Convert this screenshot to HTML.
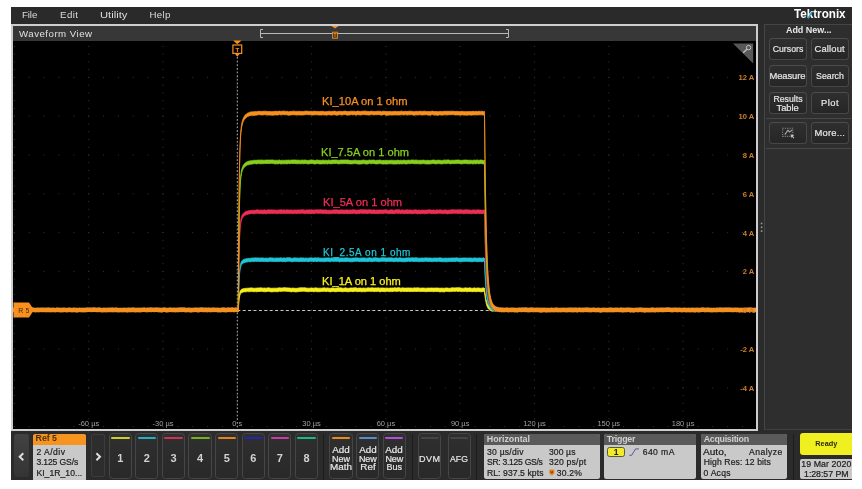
<!DOCTYPE html>
<html><head><meta charset="utf-8"><title>Tektronix Waveform View</title>
<style>
html,body{margin:0;padding:0;background:#fff;}
body{width:862px;height:489px;position:relative;overflow:hidden;font-family:"Liberation Sans", sans-serif;}
#scope div,#scope span.t{position:absolute;}
#scope{position:absolute;left:0;top:0;width:862px;height:489px;overflow:hidden;will-change:transform;}
span.t{white-space:nowrap;}
.rb{background:linear-gradient(#2f2f2f,#262626);border:1px solid #474747;border-top-color:#4c4c4c;border-radius:3.5px;box-sizing:border-box;}
.cb{background:linear-gradient(#2f2f2f,#292929);border:1px solid #464646;border-radius:3.5px;box-sizing:border-box;}
</style></head><body><div id="scope">
<div style="left:11px;top:7.3px;width:841px;height:472.3px;background:#2b2b2b;"></div>
<div style="left:11px;top:7.3px;width:841px;height:16.7px;background:#2a2a2a;"></div>
<div style="left:11px;top:24px;width:747px;height:407px;background:#000;border:2px solid #cecece;box-sizing:border-box;"></div>
<div style="left:13px;top:26px;width:743px;height:14.6px;background:#373737;"></div>
<svg style="position:absolute;left:0;top:0" width="862" height="489" viewBox="0 0 862 489"><defs><clipPath id="pc"><rect x="13" y="40.5" width="743" height="388.5"/></clipPath></defs><g clip-path="url(#pc)"><g stroke="#363636" stroke-width="1"><line x1="14.4" y1="38.10" x2="14.4" y2="429" stroke-dasharray="1 6.760"/><line x1="88.7" y1="38.10" x2="88.7" y2="429" stroke-dasharray="1 6.760"/><line x1="163.0" y1="38.10" x2="163.0" y2="429" stroke-dasharray="1 6.760"/><line x1="237.3" y1="38.10" x2="237.3" y2="429" stroke-dasharray="1 6.760"/><line x1="311.6" y1="38.10" x2="311.6" y2="429" stroke-dasharray="1 6.760"/><line x1="385.9" y1="38.10" x2="385.9" y2="429" stroke-dasharray="1 6.760"/><line x1="460.2" y1="38.10" x2="460.2" y2="429" stroke-dasharray="1 6.760"/><line x1="534.5" y1="38.10" x2="534.5" y2="429" stroke-dasharray="1 6.760"/><line x1="608.8" y1="38.10" x2="608.8" y2="429" stroke-dasharray="1 6.760"/><line x1="683.1" y1="38.10" x2="683.1" y2="429" stroke-dasharray="1 6.760"/><line x1="-60.40" y1="77.4" x2="756" y2="77.4" stroke-dasharray="1 13.860"/><line x1="-60.40" y1="116.2" x2="756" y2="116.2" stroke-dasharray="1 13.860"/><line x1="-60.40" y1="155.0" x2="756" y2="155.0" stroke-dasharray="1 13.860"/><line x1="-60.40" y1="193.8" x2="756" y2="193.8" stroke-dasharray="1 13.860"/><line x1="-60.40" y1="232.6" x2="756" y2="232.6" stroke-dasharray="1 13.860"/><line x1="-60.40" y1="271.4" x2="756" y2="271.4" stroke-dasharray="1 13.860"/><line x1="-60.40" y1="310.2" x2="756" y2="310.2" stroke-dasharray="1 13.860"/><line x1="-60.40" y1="349.0" x2="756" y2="349.0" stroke-dasharray="1 13.860"/><line x1="-60.40" y1="387.8" x2="756" y2="387.8" stroke-dasharray="1 13.860"/><line x1="-60.40" y1="426.6" x2="756" y2="426.6" stroke-dasharray="1 13.860"/></g><line x1="237.3" y1="57" x2="237.3" y2="429" stroke="#b4b4b4" stroke-width="1" stroke-dasharray="1.7 1.95"/><line x1="237.3" y1="310.5" x2="492" y2="310.5" stroke="#c8c8c8" stroke-width="1" stroke-dasharray="3 2.4"/><path d="M12.0,308.4 L13.5,308.3 L15.0,308.6 L16.5,308.3 L18.0,308.6 L19.5,308.5 L21.0,308.3 L22.5,308.6 L24.0,308.3 L25.5,308.5 L27.0,308.3 L28.5,308.3 L30.0,308.5 L31.5,308.7 L33.0,308.3 L34.5,308.4 L36.0,308.6 L37.5,308.8 L39.0,308.6 L40.5,308.5 L42.0,308.8 L43.5,308.3 L45.0,308.8 L46.5,308.4 L48.0,308.3 L49.5,308.3 L51.0,308.4 L52.5,308.7 L54.0,308.4 L55.5,308.6 L57.0,308.6 L58.5,308.5 L60.0,308.6 L61.5,308.3 L63.0,308.3 L64.5,308.4 L66.0,308.7 L67.5,308.5 L69.0,308.4 L70.5,308.6 L72.0,308.5 L73.5,308.4 L75.0,308.7 L76.5,308.7 L78.0,308.4 L79.5,308.6 L81.0,308.6 L82.5,308.8 L84.0,308.7 L85.5,308.4 L87.0,308.8 L88.5,308.3 L90.0,308.5 L91.5,308.7 L93.0,308.3 L94.5,308.5 L96.0,308.3 L97.5,308.7 L99.0,308.7 L100.5,308.6 L102.0,308.8 L103.5,308.4 L105.0,308.7 L106.5,308.6 L108.0,308.6 L109.5,308.5 L111.0,308.8 L112.5,308.8 L114.0,308.5 L115.5,308.6 L117.0,308.3 L118.5,308.7 L120.0,308.6 L121.5,308.8 L123.0,308.7 L124.5,308.4 L126.0,308.5 L127.5,308.7 L129.0,308.3 L130.5,308.5 L132.0,308.4 L133.5,308.3 L135.0,308.3 L136.5,308.7 L138.0,308.3 L139.5,308.4 L141.0,308.5 L142.5,308.8 L144.0,308.3 L145.5,308.5 L147.0,308.6 L148.5,308.8 L150.0,308.7 L151.5,308.8 L153.0,308.4 L154.5,308.5 L156.0,308.5 L157.5,308.8 L159.0,308.8 L160.5,308.3 L162.0,308.4 L163.5,308.4 L165.0,308.4 L166.5,308.5 L168.0,308.6 L169.5,308.4 L171.0,308.3 L172.5,308.5 L174.0,308.5 L175.5,308.6 L177.0,308.8 L178.5,308.7 L180.0,308.6 L181.5,308.6 L183.0,308.7 L184.5,308.3 L186.0,308.8 L187.5,308.7 L189.0,308.8 L190.5,308.7 L192.0,308.5 L193.5,308.5 L195.0,308.3 L196.5,308.6 L198.0,308.3 L199.5,308.3 L201.0,308.4 L202.5,308.3 L204.0,308.5 L205.5,308.3 L207.0,308.3 L208.5,308.3 L210.0,308.3 L211.5,308.5 L213.0,308.3 L214.5,308.8 L216.0,308.6 L217.5,308.3 L219.0,308.4 L220.5,308.5 L222.0,308.5 L223.5,308.3 L225.0,308.8 L226.5,308.8 L228.0,308.5 L229.5,308.5 L231.0,308.3 L232.5,308.3 L234.0,308.5 L235.5,308.4 L237.0,308.7 L238.3,308.6 L238.3,308.6 L238.6,302.6 L238.9,298.6 L239.2,295.8 L239.5,293.6 L239.8,292.2 L240.1,291.3 L240.4,290.6 L240.7,290.2 L241.0,289.8 L241.3,289.5 L241.6,289.3 L241.9,289.2 L242.2,289.0 L242.5,288.9 L242.8,288.8 L243.1,288.7 L243.4,288.7 L243.7,288.6 L244.0,288.5 L244.3,288.5 L244.6,288.5 L244.9,288.4 L245.2,288.4 L245.5,288.3 L245.8,288.3 L246.1,288.3 L246.4,288.3 L246.7,288.2 L247.0,288.2 L247.3,288.2 L247.6,288.2 L247.9,288.2 L248.2,288.2 L248.5,288.1 L248.8,288.1 L249.1,288.1 L249.4,288.1 L249.7,288.1 L250.0,288.1 L250.3,287.9 L250.6,287.8 L250.9,288.3 L251.2,288.1 L251.5,287.8 L251.8,288.1 L252.1,287.8 L252.4,288.1 L253.9,288.3 L255.4,288.2 L256.9,288.1 L258.4,287.9 L259.9,287.9 L261.4,287.8 L262.9,288.2 L264.4,288.0 L265.9,288.2 L267.4,287.9 L268.9,287.8 L270.4,288.2 L271.9,288.3 L273.4,288.2 L274.9,288.2 L276.4,288.2 L277.9,288.1 L279.4,287.8 L280.9,288.0 L282.4,287.9 L283.9,287.7 L285.4,287.7 L286.9,287.9 L288.4,287.9 L289.9,288.1 L291.4,288.3 L292.9,288.0 L294.4,288.3 L295.9,288.3 L297.4,288.3 L298.9,287.9 L300.4,287.8 L301.9,287.8 L303.4,287.8 L304.9,287.8 L306.4,288.1 L307.9,288.2 L309.4,288.2 L310.9,288.0 L312.4,288.1 L313.9,288.2 L315.4,287.8 L316.9,288.1 L318.4,288.2 L319.9,288.2 L321.4,288.2 L322.9,288.0 L324.4,287.8 L325.9,288.2 L327.4,287.9 L328.9,288.2 L330.4,288.3 L331.9,287.9 L333.4,287.9 L334.9,288.3 L336.4,288.1 L337.9,287.8 L339.4,287.8 L340.9,287.8 L342.4,288.2 L343.9,288.2 L345.4,287.8 L346.9,288.2 L348.4,288.3 L349.9,288.1 L351.4,287.9 L352.9,288.0 L354.4,287.8 L355.9,287.7 L357.4,288.3 L358.9,288.1 L360.4,288.0 L361.9,288.3 L363.4,288.0 L364.9,288.2 L366.4,288.2 L367.9,287.8 L369.4,287.9 L370.9,287.9 L372.4,287.8 L373.9,288.1 L375.4,287.9 L376.9,288.0 L378.4,287.8 L379.9,288.2 L381.4,287.9 L382.9,288.0 L384.4,288.1 L385.9,288.2 L387.4,288.0 L388.9,288.3 L390.4,288.0 L391.9,288.0 L393.4,288.0 L394.9,287.7 L396.4,288.0 L397.9,287.8 L399.4,287.7 L400.9,288.2 L402.4,287.8 L403.9,288.0 L405.4,288.1 L406.9,288.0 L408.4,287.9 L409.9,288.0 L411.4,288.0 L412.9,288.2 L414.4,287.8 L415.9,288.0 L417.4,287.8 L418.9,287.9 L420.4,288.2 L421.9,288.0 L423.4,288.0 L424.9,288.2 L426.4,288.2 L427.9,288.0 L429.4,288.1 L430.9,288.0 L432.4,288.0 L433.9,288.1 L435.4,288.0 L436.9,288.0 L438.4,288.0 L439.9,288.3 L441.4,288.1 L442.9,288.2 L444.4,288.3 L445.9,287.9 L447.4,288.0 L448.9,288.3 L450.4,288.2 L451.9,287.8 L453.4,287.8 L454.9,288.0 L456.4,287.7 L457.9,287.8 L459.4,287.7 L460.9,288.1 L462.4,288.2 L463.9,288.2 L465.4,287.8 L466.9,288.1 L468.4,288.1 L469.9,287.8 L471.4,288.2 L472.9,288.3 L474.4,287.8 L475.9,288.3 L477.4,287.9 L478.9,288.0 L480.4,288.3 L481.9,288.2 L483.4,287.8 L484.5,288.5 L484.5,288.0 L484.9,291.9 L485.3,295.0 L485.7,297.5 L486.1,299.4 L486.5,301.0 L486.9,302.3 L487.3,303.4 L487.7,304.2 L488.1,304.9 L488.5,305.4 L488.9,305.9 L489.3,306.3 L489.7,306.6 L490.1,306.8 L490.5,307.0 L490.9,307.2 L491.3,307.4 L491.7,307.5 L492.1,307.6 L492.5,307.7 L492.9,307.8 L493.3,307.8 L493.7,308.2 L494.1,308.3 L494.5,308.3 L494.9,308.3 L495.3,308.4 L495.7,308.4 L496.1,308.4 L496.5,308.4 L496.9,308.4 L497.3,308.5 L497.7,308.5 L498.1,308.5 L498.5,308.5 L498.9,308.5 L499.3,308.5 L499.7,308.4 L500.1,308.3 L500.5,308.4 L500.9,308.7 L502.4,308.2 L503.9,308.6 L505.4,308.5 L506.9,308.3 L508.4,308.4 L509.9,308.6 L511.4,308.6 L512.9,308.3 L514.4,308.8 L515.9,308.7 L517.4,308.8 L518.9,308.3 L520.4,308.4 L521.9,308.3 L523.4,308.7 L524.9,308.4 L526.4,308.3 L527.9,308.5 L529.4,308.8 L530.9,308.7 L532.4,308.4 L533.9,308.3 L535.4,308.8 L536.9,308.6 L538.4,308.7 L539.9,308.3 L541.4,308.3 L542.9,308.7 L544.4,308.5 L545.9,308.3 L547.4,308.8 L548.9,308.6 L550.4,308.7 L551.9,308.3 L553.4,308.8 L554.9,308.3 L556.4,308.8 L557.9,308.5 L559.4,308.5 L560.9,308.6 L562.4,308.8 L563.9,308.4 L565.4,308.3 L566.9,308.6 L568.4,308.4 L569.9,308.3 L571.4,308.3 L572.9,308.3 L574.4,308.4 L575.9,308.4 L577.4,308.4 L578.9,308.7 L580.4,308.4 L581.9,308.6 L583.4,308.4 L584.9,308.5 L586.4,308.3 L587.9,308.4 L589.4,308.3 L590.9,308.7 L592.4,308.6 L593.9,308.4 L595.4,308.5 L596.9,308.8 L598.4,308.3 L599.9,308.7 L601.4,308.5 L602.9,308.5 L604.4,308.8 L605.9,308.5 L607.4,308.6 L608.9,308.7 L610.4,308.8 L611.9,308.5 L613.4,308.7 L614.9,308.7 L616.4,308.6 L617.9,308.5 L619.4,308.5 L620.9,308.3 L622.4,308.3 L623.9,308.3 L625.4,308.7 L626.9,308.4 L628.4,308.3 L629.9,308.3 L631.4,308.8 L632.9,308.8 L634.4,308.7 L635.9,308.4 L637.4,308.4 L638.9,308.4 L640.4,308.5 L641.9,308.3 L643.4,308.5 L644.9,308.4 L646.4,308.8 L647.9,308.8 L649.4,308.6 L650.9,308.4 L652.4,308.8 L653.9,308.4 L655.4,308.5 L656.9,308.3 L658.4,308.5 L659.9,308.5 L661.4,308.6 L662.9,308.4 L664.4,308.6 L665.9,308.3 L667.4,308.4 L668.9,308.3 L670.4,308.5 L671.9,308.3 L673.4,308.3 L674.9,308.4 L676.4,308.4 L677.9,308.6 L679.4,308.6 L680.9,308.7 L682.4,308.6 L683.9,308.7 L685.4,308.8 L686.9,308.5 L688.4,308.4 L689.9,308.8 L691.4,308.3 L692.9,308.7 L694.4,308.6 L695.9,308.3 L697.4,308.8 L698.9,308.8 L700.4,308.6 L701.9,308.7 L703.4,308.7 L704.9,308.3 L706.4,308.6 L707.9,308.6 L709.4,308.8 L710.9,308.7 L712.4,308.7 L713.9,308.6 L715.4,308.8 L716.9,308.7 L718.4,308.7 L719.9,308.4 L721.4,308.3 L722.9,308.3 L724.4,308.5 L725.9,308.3 L727.4,308.8 L728.9,308.6 L730.4,308.6 L731.9,308.6 L733.4,308.7 L734.9,308.5 L736.4,308.3 L737.9,308.7 L739.4,308.7 L740.9,308.6 L742.4,308.6 L743.9,308.6 L745.4,308.3 L746.9,308.7 L748.4,308.4 L749.9,308.3 L751.4,308.4 L752.9,308.7 L754.4,308.4 L755.9,308.7 L757.4,308.8 L757.4,311.6 L755.9,311.5 L754.4,311.2 L752.9,311.5 L751.4,311.3 L749.9,311.1 L748.4,311.2 L746.9,311.4 L745.4,311.0 L743.9,311.4 L742.4,311.4 L740.9,311.3 L739.4,311.5 L737.9,311.4 L736.4,310.9 L734.9,311.3 L733.4,311.5 L731.9,311.5 L730.4,311.5 L728.9,311.3 L727.4,311.6 L725.9,311.1 L724.4,311.3 L722.9,311.0 L721.4,311.2 L719.9,311.1 L718.4,311.6 L716.9,311.6 L715.4,311.4 L713.9,311.4 L712.4,311.6 L710.9,311.7 L709.4,311.5 L707.9,311.3 L706.4,311.3 L704.9,311.3 L703.4,311.5 L701.9,311.5 L700.4,311.3 L698.9,311.6 L697.4,311.7 L695.9,311.0 L694.4,311.5 L692.9,311.5 L691.4,311.3 L689.9,311.7 L688.4,311.2 L686.9,311.4 L685.4,311.6 L683.9,311.3 L682.4,311.3 L680.9,311.5 L679.4,311.4 L677.9,311.3 L676.4,311.1 L674.9,311.2 L673.4,311.0 L671.9,311.2 L670.4,311.1 L668.9,311.2 L667.4,311.3 L665.9,310.9 L664.4,311.5 L662.9,311.2 L661.4,311.5 L659.9,311.3 L658.4,311.2 L656.9,311.0 L655.4,311.4 L653.9,311.3 L652.4,311.6 L650.9,311.2 L649.4,311.3 L647.9,311.5 L646.4,311.5 L644.9,311.3 L643.4,311.3 L641.9,311.3 L640.4,311.3 L638.9,311.2 L637.4,311.2 L635.9,311.1 L634.4,311.4 L632.9,311.7 L631.4,311.7 L629.9,311.2 L628.4,311.2 L626.9,311.3 L625.4,311.6 L623.9,311.1 L622.4,311.2 L620.9,310.9 L619.4,311.3 L617.9,311.3 L616.4,311.5 L614.9,311.5 L613.4,311.5 L611.9,311.1 L610.4,311.8 L608.9,311.4 L607.4,311.3 L605.9,311.2 L604.4,311.5 L602.9,311.4 L601.4,311.5 L599.9,311.5 L598.4,311.2 L596.9,311.6 L595.4,311.4 L593.9,311.1 L592.4,311.3 L590.9,311.4 L589.4,311.0 L587.9,311.3 L586.4,311.1 L584.9,311.2 L583.4,311.3 L581.9,311.5 L580.4,311.2 L578.9,311.4 L577.4,311.1 L575.9,311.1 L574.4,311.1 L572.9,311.0 L571.4,311.1 L569.9,311.0 L568.4,311.2 L566.9,311.5 L565.4,311.2 L563.9,311.2 L562.4,311.6 L560.9,311.4 L559.4,311.2 L557.9,311.3 L556.4,311.4 L554.9,311.0 L553.4,311.7 L551.9,311.0 L550.4,311.5 L548.9,311.5 L547.4,311.7 L545.9,311.0 L544.4,311.2 L542.9,311.4 L541.4,311.1 L539.9,311.1 L538.4,311.6 L536.9,311.5 L535.4,311.7 L533.9,311.0 L532.4,311.1 L530.9,311.6 L529.4,311.7 L527.9,311.3 L526.4,311.2 L524.9,311.1 L523.4,311.5 L521.9,311.2 L520.4,311.3 L518.9,311.2 L517.4,311.8 L515.9,311.4 L514.4,311.5 L512.9,311.0 L511.4,311.4 L509.9,311.5 L508.4,311.4 L506.9,311.1 L505.4,311.4 L503.9,311.5 L502.4,311.0 L500.9,311.5 L500.5,311.1 L500.1,311.2 L499.7,311.1 L499.3,311.4 L498.9,311.3 L498.5,311.2 L498.1,311.2 L497.7,311.2 L497.3,311.3 L496.9,311.3 L496.5,311.1 L496.1,311.1 L495.7,311.2 L495.3,311.2 L494.9,311.1 L494.5,311.0 L494.1,311.1 L493.7,310.9 L493.3,311.3 L492.9,311.2 L492.5,311.3 L492.1,311.1 L491.7,311.1 L491.3,310.9 L490.9,310.6 L490.5,310.5 L490.1,310.5 L489.7,310.1 L489.3,309.7 L488.9,309.3 L488.5,308.9 L488.1,308.4 L487.7,307.7 L487.3,306.8 L486.9,305.9 L486.5,304.7 L486.1,302.9 L485.7,300.8 L485.3,298.4 L484.9,295.4 L484.5,291.6 L484.5,291.9 L483.4,291.4 L481.9,291.8 L480.4,291.8 L478.9,291.4 L477.4,291.6 L475.9,291.7 L474.4,291.4 L472.9,291.7 L471.4,291.6 L469.9,291.4 L468.4,291.5 L466.9,291.8 L465.4,291.3 L463.9,291.6 L462.4,291.6 L460.9,291.6 L459.4,291.3 L457.9,291.5 L456.4,291.1 L454.9,291.4 L453.4,291.2 L451.9,291.4 L450.4,291.6 L448.9,291.6 L447.4,291.4 L445.9,291.3 L444.4,291.9 L442.9,291.8 L441.4,291.7 L439.9,291.9 L438.4,291.6 L436.9,291.5 L435.4,291.4 L433.9,291.7 L432.4,291.6 L430.9,291.4 L429.4,291.6 L427.9,291.4 L426.4,291.7 L424.9,291.6 L423.4,291.4 L421.9,291.4 L420.4,291.6 L418.9,291.3 L417.4,291.5 L415.9,291.4 L414.4,291.4 L412.9,291.6 L411.4,291.5 L409.9,291.6 L408.4,291.5 L406.9,291.5 L405.4,291.5 L403.9,291.5 L402.4,291.3 L400.9,291.8 L399.4,291.1 L397.9,291.3 L396.4,291.6 L394.9,291.1 L393.4,291.5 L391.9,291.6 L390.4,291.6 L388.9,291.6 L387.4,291.3 L385.9,291.6 L384.4,291.7 L382.9,291.4 L381.4,291.5 L379.9,291.9 L378.4,291.2 L376.9,291.4 L375.4,291.5 L373.9,291.6 L372.4,291.3 L370.9,291.4 L369.4,291.3 L367.9,291.3 L366.4,291.5 L364.9,291.8 L363.4,291.6 L361.9,291.8 L360.4,291.6 L358.9,291.4 L357.4,291.7 L355.9,291.2 L354.4,291.4 L352.9,291.7 L351.4,291.4 L349.9,291.5 L348.4,291.8 L346.9,291.7 L345.4,291.4 L343.9,291.6 L342.4,291.8 L340.9,291.4 L339.4,291.4 L337.9,291.4 L336.4,291.7 L334.9,291.7 L333.4,291.4 L331.9,291.4 L330.4,291.9 L328.9,291.6 L327.4,291.3 L325.9,291.7 L324.4,291.2 L322.9,291.4 L321.4,291.5 L319.9,291.7 L318.4,291.7 L316.9,291.7 L315.4,291.4 L313.9,291.8 L312.4,291.5 L310.9,291.4 L309.4,291.6 L307.9,291.7 L306.4,291.6 L304.9,291.3 L303.4,291.2 L301.9,291.3 L300.4,291.4 L298.9,291.5 L297.4,291.8 L295.9,291.9 L294.4,291.8 L292.9,291.4 L291.4,291.9 L289.9,291.6 L288.4,291.4 L286.9,291.3 L285.4,291.3 L283.9,291.1 L282.4,291.3 L280.9,291.4 L279.4,291.2 L277.9,291.8 L276.4,291.7 L274.9,291.6 L273.4,291.7 L271.9,291.9 L270.4,291.7 L268.9,291.3 L267.4,291.5 L265.9,291.7 L264.4,291.7 L262.9,291.5 L261.4,291.3 L259.9,291.5 L258.4,291.5 L256.9,291.8 L255.4,291.6 L253.9,291.8 L252.4,291.4 L252.1,291.2 L251.8,291.7 L251.5,291.4 L251.2,291.7 L250.9,291.8 L250.6,291.4 L250.3,291.4 L250.0,291.5 L249.7,291.7 L249.4,291.7 L249.1,291.5 L248.8,291.7 L248.5,291.7 L248.2,291.6 L247.9,291.6 L247.6,291.6 L247.3,291.6 L247.0,291.6 L246.7,291.8 L246.4,291.8 L246.1,291.7 L245.8,291.7 L245.5,291.8 L245.2,291.9 L244.9,291.8 L244.6,291.9 L244.3,291.9 L244.0,292.1 L243.7,292.1 L243.4,292.0 L243.1,292.1 L242.8,292.3 L242.5,292.4 L242.2,292.6 L241.9,292.5 L241.6,292.7 L241.3,293.1 L241.0,293.3 L240.7,293.6 L240.4,294.1 L240.1,294.9 L239.8,295.7 L239.5,297.1 L239.2,298.6 L238.9,301.4 L238.6,305.5 L238.3,311.5 L238.3,311.3 L237.0,311.5 L235.5,311.3 L234.0,311.2 L232.5,311.0 L231.0,311.2 L229.5,311.3 L228.0,311.4 L226.5,311.6 L225.0,311.7 L223.5,311.1 L222.0,311.2 L220.5,311.1 L219.0,311.2 L217.5,311.2 L216.0,311.5 L214.5,311.5 L213.0,311.1 L211.5,311.2 L210.0,311.1 L208.5,311.0 L207.0,311.0 L205.5,311.1 L204.0,311.4 L202.5,311.0 L201.0,311.2 L199.5,311.2 L198.0,311.2 L196.5,311.3 L195.0,311.0 L193.5,311.4 L192.0,311.4 L190.5,311.5 L189.0,311.4 L187.5,311.6 L186.0,311.6 L184.5,311.2 L183.0,311.5 L181.5,311.5 L180.0,311.3 L178.5,311.6 L177.0,311.5 L175.5,311.4 L174.0,311.4 L172.5,311.4 L171.0,311.0 L169.5,311.1 L168.0,311.4 L166.5,311.3 L165.0,311.2 L163.5,311.1 L162.0,311.1 L160.5,311.2 L159.0,311.7 L157.5,311.4 L156.0,311.3 L154.5,311.4 L153.0,311.1 L151.5,311.7 L150.0,311.4 L148.5,311.6 L147.0,311.4 L145.5,311.4 L144.0,311.0 L142.5,311.5 L141.0,311.3 L139.5,311.2 L138.0,311.2 L136.5,311.5 L135.0,311.1 L133.5,311.0 L132.0,311.2 L130.5,311.3 L129.0,311.0 L127.5,311.5 L126.0,311.4 L124.5,311.2 L123.0,311.4 L121.5,311.6 L120.0,311.3 L118.5,311.4 L117.0,311.1 L115.5,311.3 L114.0,311.3 L112.5,311.6 L111.0,311.4 L109.5,311.4 L108.0,311.3 L106.5,311.5 L105.0,311.6 L103.5,311.2 L102.0,311.4 L100.5,311.4 L99.0,311.5 L97.5,311.6 L96.0,311.0 L94.5,311.5 L93.0,311.3 L91.5,311.6 L90.0,311.4 L88.5,311.0 L87.0,311.8 L85.5,311.2 L84.0,311.6 L82.5,311.7 L81.0,311.3 L79.5,311.5 L78.0,311.3 L76.5,311.3 L75.0,311.5 L73.5,311.3 L72.0,311.2 L70.5,311.5 L69.0,311.2 L67.5,311.4 L66.0,311.4 L64.5,311.2 L63.0,311.2 L61.5,311.0 L60.0,311.3 L58.5,311.3 L57.0,311.4 L55.5,311.3 L54.0,311.1 L52.5,311.4 L51.0,311.4 L49.5,311.2 L48.0,311.3 L46.5,311.1 L45.0,311.7 L43.5,311.0 L42.0,311.6 L40.5,311.3 L39.0,311.4 L37.5,311.7 L36.0,311.4 L34.5,311.2 L33.0,311.2 L31.5,311.4 L30.0,311.5 L28.5,311.1 L27.0,311.1 L25.5,311.4 L24.0,311.0 L22.5,311.5 L21.0,311.1 L19.5,311.2 L18.0,311.5 L16.5,311.1 L15.0,311.3 L13.5,311.2 L12.0,311.1Z" fill="#f7ee1e" stroke="#f7ee1e" stroke-width="0.8" stroke-linejoin="round"/><path d="M12.0,308.7 L13.5,308.4 L15.0,308.6 L16.5,308.8 L18.0,308.6 L19.5,308.6 L21.0,308.4 L22.5,308.3 L24.0,308.3 L25.5,308.3 L27.0,308.6 L28.5,308.5 L30.0,308.6 L31.5,308.8 L33.0,308.3 L34.5,308.4 L36.0,308.6 L37.5,308.3 L39.0,308.3 L40.5,308.5 L42.0,308.3 L43.5,308.5 L45.0,308.4 L46.5,308.6 L48.0,308.6 L49.5,308.4 L51.0,308.6 L52.5,308.5 L54.0,308.3 L55.5,308.8 L57.0,308.4 L58.5,308.3 L60.0,308.3 L61.5,308.6 L63.0,308.8 L64.5,308.7 L66.0,308.5 L67.5,308.4 L69.0,308.3 L70.5,308.6 L72.0,308.6 L73.5,308.5 L75.0,308.6 L76.5,308.5 L78.0,308.8 L79.5,308.7 L81.0,308.4 L82.5,308.8 L84.0,308.3 L85.5,308.6 L87.0,308.5 L88.5,308.4 L90.0,308.3 L91.5,308.7 L93.0,308.3 L94.5,308.6 L96.0,308.8 L97.5,308.3 L99.0,308.4 L100.5,308.6 L102.0,308.6 L103.5,308.6 L105.0,308.7 L106.5,308.4 L108.0,308.4 L109.5,308.4 L111.0,308.3 L112.5,308.8 L114.0,308.7 L115.5,308.7 L117.0,308.3 L118.5,308.8 L120.0,308.7 L121.5,308.5 L123.0,308.7 L124.5,308.5 L126.0,308.4 L127.5,308.3 L129.0,308.4 L130.5,308.3 L132.0,308.5 L133.5,308.7 L135.0,308.7 L136.5,308.8 L138.0,308.7 L139.5,308.4 L141.0,308.6 L142.5,308.5 L144.0,308.7 L145.5,308.6 L147.0,308.4 L148.5,308.6 L150.0,308.8 L151.5,308.4 L153.0,308.8 L154.5,308.3 L156.0,308.4 L157.5,308.4 L159.0,308.7 L160.5,308.8 L162.0,308.7 L163.5,308.4 L165.0,308.8 L166.5,308.4 L168.0,308.4 L169.5,308.8 L171.0,308.6 L172.5,308.7 L174.0,308.6 L175.5,308.8 L177.0,308.5 L178.5,308.8 L180.0,308.7 L181.5,308.8 L183.0,308.5 L184.5,308.7 L186.0,308.6 L187.5,308.4 L189.0,308.4 L190.5,308.6 L192.0,308.3 L193.5,308.8 L195.0,308.3 L196.5,308.3 L198.0,308.3 L199.5,308.8 L201.0,308.5 L202.5,308.3 L204.0,308.3 L205.5,308.3 L207.0,308.7 L208.5,308.6 L210.0,308.7 L211.5,308.7 L213.0,308.3 L214.5,308.6 L216.0,308.5 L217.5,308.7 L219.0,308.7 L220.5,308.8 L222.0,308.3 L223.5,308.8 L225.0,308.8 L226.5,308.8 L228.0,308.3 L229.5,308.4 L231.0,308.3 L232.5,308.3 L234.0,308.8 L235.5,308.7 L237.0,308.6 L238.3,308.6 L238.3,308.6 L238.6,293.8 L238.9,283.8 L239.2,276.9 L239.5,271.8 L239.8,268.6 L240.1,266.2 L240.4,264.6 L240.7,263.4 L241.0,262.5 L241.3,261.8 L241.6,261.3 L241.9,260.9 L242.2,260.5 L242.5,260.3 L242.8,260.0 L243.1,259.8 L243.4,259.7 L243.7,259.5 L244.0,259.4 L244.3,259.2 L244.6,259.1 L244.9,259.0 L245.2,258.9 L245.5,258.9 L245.8,258.8 L246.1,258.7 L246.4,258.6 L246.7,258.6 L247.0,258.5 L247.3,258.5 L247.6,258.4 L247.9,258.4 L248.2,258.4 L248.5,258.3 L248.8,258.3 L249.1,258.3 L249.4,258.3 L249.7,258.2 L250.0,258.2 L250.3,258.4 L250.6,258.3 L250.9,258.0 L251.2,257.9 L251.5,257.9 L251.8,258.3 L252.1,257.9 L252.4,258.0 L253.9,258.0 L255.4,257.8 L256.9,257.9 L258.4,257.9 L259.9,258.1 L261.4,257.9 L262.9,257.9 L264.4,258.3 L265.9,258.0 L267.4,258.2 L268.9,258.1 L270.4,257.7 L271.9,257.9 L273.4,258.0 L274.9,258.2 L276.4,257.9 L277.9,258.1 L279.4,258.0 L280.9,257.8 L282.4,258.2 L283.9,257.8 L285.4,258.2 L286.9,257.8 L288.4,257.7 L289.9,257.8 L291.4,258.2 L292.9,258.3 L294.4,257.7 L295.9,258.0 L297.4,258.0 L298.9,258.2 L300.4,257.8 L301.9,258.0 L303.4,257.9 L304.9,258.2 L306.4,257.9 L307.9,258.3 L309.4,257.9 L310.9,257.8 L312.4,258.1 L313.9,258.0 L315.4,257.8 L316.9,258.1 L318.4,257.7 L319.9,258.2 L321.4,258.1 L322.9,258.2 L324.4,258.1 L325.9,257.9 L327.4,257.9 L328.9,257.9 L330.4,258.2 L331.9,257.8 L333.4,258.2 L334.9,257.7 L336.4,257.8 L337.9,257.9 L339.4,258.2 L340.9,258.0 L342.4,257.9 L343.9,258.2 L345.4,257.8 L346.9,258.0 L348.4,258.0 L349.9,258.2 L351.4,258.2 L352.9,258.1 L354.4,257.9 L355.9,257.9 L357.4,257.8 L358.9,258.2 L360.4,258.1 L361.9,258.1 L363.4,257.8 L364.9,258.0 L366.4,258.2 L367.9,258.0 L369.4,257.8 L370.9,258.0 L372.4,258.2 L373.9,257.8 L375.4,257.8 L376.9,257.9 L378.4,258.1 L379.9,258.2 L381.4,257.8 L382.9,257.8 L384.4,257.8 L385.9,257.9 L387.4,258.0 L388.9,257.8 L390.4,257.9 L391.9,257.8 L393.4,258.3 L394.9,258.1 L396.4,257.8 L397.9,258.3 L399.4,257.8 L400.9,257.9 L402.4,258.3 L403.9,258.2 L405.4,258.1 L406.9,258.0 L408.4,257.8 L409.9,258.1 L411.4,257.8 L412.9,257.8 L414.4,257.9 L415.9,257.7 L417.4,257.9 L418.9,258.2 L420.4,258.1 L421.9,258.0 L423.4,258.1 L424.9,258.0 L426.4,257.8 L427.9,258.1 L429.4,257.9 L430.9,258.1 L432.4,258.2 L433.9,258.0 L435.4,258.0 L436.9,258.1 L438.4,258.0 L439.9,257.8 L441.4,258.1 L442.9,258.2 L444.4,258.2 L445.9,258.1 L447.4,258.2 L448.9,258.1 L450.4,258.1 L451.9,258.0 L453.4,257.9 L454.9,258.1 L456.4,257.8 L457.9,258.0 L459.4,258.2 L460.9,258.1 L462.4,258.1 L463.9,257.9 L465.4,258.0 L466.9,258.0 L468.4,258.1 L469.9,257.9 L471.4,258.1 L472.9,258.3 L474.4,257.8 L475.9,258.1 L477.4,258.2 L478.9,257.9 L480.4,258.0 L481.9,258.3 L483.4,257.7 L484.5,258.5 L484.5,258.0 L484.9,267.7 L485.3,275.4 L485.7,281.5 L486.1,286.4 L486.5,290.4 L486.9,293.6 L487.3,296.2 L487.7,298.3 L488.1,300.0 L488.5,301.3 L488.9,302.5 L489.3,303.4 L489.7,304.2 L490.1,304.8 L490.5,305.3 L490.9,305.8 L491.3,306.1 L491.7,306.4 L492.1,306.7 L492.5,306.9 L492.9,307.1 L493.3,307.3 L493.7,307.7 L494.1,307.8 L494.5,307.9 L494.9,308.0 L495.3,308.1 L495.7,308.2 L496.1,308.2 L496.5,308.3 L496.9,308.3 L497.3,308.3 L497.7,308.4 L498.1,308.4 L498.5,308.4 L498.9,308.4 L499.3,308.2 L499.7,308.6 L500.1,308.7 L500.5,308.5 L500.9,308.2 L502.4,308.6 L503.9,308.6 L505.4,308.7 L506.9,308.5 L508.4,308.6 L509.9,308.7 L511.4,308.6 L512.9,308.5 L514.4,308.8 L515.9,308.4 L517.4,308.7 L518.9,308.5 L520.4,308.7 L521.9,308.3 L523.4,308.8 L524.9,308.5 L526.4,308.3 L527.9,308.4 L529.4,308.5 L530.9,308.3 L532.4,308.5 L533.9,308.5 L535.4,308.7 L536.9,308.5 L538.4,308.4 L539.9,308.4 L541.4,308.7 L542.9,308.8 L544.4,308.6 L545.9,308.4 L547.4,308.7 L548.9,308.5 L550.4,308.4 L551.9,308.3 L553.4,308.7 L554.9,308.7 L556.4,308.6 L557.9,308.5 L559.4,308.6 L560.9,308.4 L562.4,308.8 L563.9,308.5 L565.4,308.6 L566.9,308.7 L568.4,308.7 L569.9,308.5 L571.4,308.4 L572.9,308.6 L574.4,308.3 L575.9,308.8 L577.4,308.5 L578.9,308.8 L580.4,308.4 L581.9,308.5 L583.4,308.4 L584.9,308.5 L586.4,308.4 L587.9,308.3 L589.4,308.7 L590.9,308.4 L592.4,308.4 L593.9,308.4 L595.4,308.5 L596.9,308.5 L598.4,308.6 L599.9,308.6 L601.4,308.5 L602.9,308.8 L604.4,308.8 L605.9,308.3 L607.4,308.7 L608.9,308.8 L610.4,308.7 L611.9,308.3 L613.4,308.7 L614.9,308.6 L616.4,308.3 L617.9,308.3 L619.4,308.8 L620.9,308.6 L622.4,308.4 L623.9,308.3 L625.4,308.3 L626.9,308.4 L628.4,308.7 L629.9,308.5 L631.4,308.3 L632.9,308.8 L634.4,308.7 L635.9,308.4 L637.4,308.8 L638.9,308.6 L640.4,308.7 L641.9,308.7 L643.4,308.8 L644.9,308.7 L646.4,308.8 L647.9,308.4 L649.4,308.7 L650.9,308.6 L652.4,308.7 L653.9,308.5 L655.4,308.8 L656.9,308.6 L658.4,308.4 L659.9,308.4 L661.4,308.3 L662.9,308.5 L664.4,308.3 L665.9,308.5 L667.4,308.3 L668.9,308.5 L670.4,308.5 L671.9,308.6 L673.4,308.8 L674.9,308.3 L676.4,308.8 L677.9,308.5 L679.4,308.6 L680.9,308.6 L682.4,308.8 L683.9,308.5 L685.4,308.5 L686.9,308.8 L688.4,308.3 L689.9,308.6 L691.4,308.6 L692.9,308.3 L694.4,308.6 L695.9,308.7 L697.4,308.8 L698.9,308.4 L700.4,308.8 L701.9,308.6 L703.4,308.5 L704.9,308.8 L706.4,308.3 L707.9,308.7 L709.4,308.6 L710.9,308.5 L712.4,308.8 L713.9,308.5 L715.4,308.5 L716.9,308.6 L718.4,308.7 L719.9,308.4 L721.4,308.5 L722.9,308.5 L724.4,308.6 L725.9,308.7 L727.4,308.4 L728.9,308.7 L730.4,308.5 L731.9,308.6 L733.4,308.4 L734.9,308.6 L736.4,308.8 L737.9,308.6 L739.4,308.7 L740.9,308.4 L742.4,308.4 L743.9,308.4 L745.4,308.6 L746.9,308.6 L748.4,308.7 L749.9,308.3 L751.4,308.7 L752.9,308.8 L754.4,308.6 L755.9,308.3 L757.4,308.4 L757.4,311.1 L755.9,311.0 L754.4,311.5 L752.9,311.6 L751.4,311.5 L749.9,311.2 L748.4,311.6 L746.9,311.5 L745.4,311.4 L743.9,311.3 L742.4,311.3 L740.9,311.3 L739.4,311.6 L737.9,311.4 L736.4,311.7 L734.9,311.3 L733.4,311.3 L731.9,311.2 L730.4,311.2 L728.9,311.4 L727.4,311.3 L725.9,311.7 L724.4,311.4 L722.9,311.3 L721.4,311.4 L719.9,311.3 L718.4,311.5 L716.9,311.3 L715.4,311.3 L713.9,311.2 L712.4,311.5 L710.9,311.2 L709.4,311.5 L707.9,311.6 L706.4,310.9 L704.9,311.6 L703.4,311.2 L701.9,311.2 L700.4,311.7 L698.9,311.3 L697.4,311.7 L695.9,311.4 L694.4,311.3 L692.9,311.0 L691.4,311.5 L689.9,311.6 L688.4,311.2 L686.9,311.6 L685.4,311.3 L683.9,311.2 L682.4,311.6 L680.9,311.4 L679.4,311.3 L677.9,311.2 L676.4,311.4 L674.9,311.1 L673.4,311.5 L671.9,311.5 L670.4,311.2 L668.9,311.5 L667.4,311.0 L665.9,311.2 L664.4,311.2 L662.9,311.3 L661.4,311.2 L659.9,311.1 L658.4,311.1 L656.9,311.5 L655.4,311.6 L653.9,311.4 L652.4,311.6 L650.9,311.2 L649.4,311.5 L647.9,311.2 L646.4,311.5 L644.9,311.7 L643.4,311.5 L641.9,311.6 L640.4,311.6 L638.9,311.3 L637.4,311.4 L635.9,311.2 L634.4,311.6 L632.9,311.5 L631.4,311.1 L629.9,311.3 L628.4,311.4 L626.9,311.3 L625.4,311.1 L623.9,311.0 L622.4,311.2 L620.9,311.5 L619.4,311.6 L617.9,311.1 L616.4,311.0 L614.9,311.5 L613.4,311.5 L611.9,311.2 L610.4,311.6 L608.9,311.6 L607.4,311.5 L605.9,311.2 L604.4,311.7 L602.9,311.7 L601.4,311.3 L599.9,311.4 L598.4,311.3 L596.9,311.4 L595.4,311.4 L593.9,311.3 L592.4,311.1 L590.9,311.3 L589.4,311.6 L587.9,311.2 L586.4,311.2 L584.9,311.2 L583.4,311.2 L581.9,311.4 L580.4,311.2 L578.9,311.6 L577.4,311.3 L575.9,311.7 L574.4,311.2 L572.9,311.3 L571.4,311.1 L569.9,311.3 L568.4,311.5 L566.9,311.6 L565.4,311.5 L563.9,311.4 L562.4,311.5 L560.9,311.3 L559.4,311.5 L557.9,311.4 L556.4,311.5 L554.9,311.5 L553.4,311.6 L551.9,311.2 L550.4,311.2 L548.9,311.4 L547.4,311.5 L545.9,311.1 L544.4,311.4 L542.9,311.7 L541.4,311.4 L539.9,311.3 L538.4,311.3 L536.9,311.2 L535.4,311.5 L533.9,311.4 L532.4,311.3 L530.9,311.0 L529.4,311.2 L527.9,311.3 L526.4,311.2 L524.9,311.3 L523.4,311.5 L521.9,311.2 L520.4,311.6 L518.9,311.2 L517.4,311.5 L515.9,311.3 L514.4,311.7 L512.9,311.3 L511.4,311.4 L509.9,311.6 L508.4,311.3 L506.9,311.3 L505.4,311.4 L503.9,311.4 L502.4,311.3 L500.9,311.1 L500.5,311.3 L500.1,311.5 L499.7,311.3 L499.3,310.9 L498.9,311.4 L498.5,311.2 L498.1,311.1 L497.7,311.2 L497.3,311.2 L496.9,311.0 L496.5,311.1 L496.1,311.0 L495.7,311.0 L495.3,310.8 L494.9,310.7 L494.5,310.9 L494.1,310.8 L493.7,310.5 L493.3,310.8 L492.9,310.5 L492.5,310.5 L492.1,310.2 L491.7,310.1 L491.3,309.7 L490.9,309.4 L490.5,309.0 L490.1,308.2 L489.7,307.5 L489.3,306.8 L488.9,305.9 L488.5,304.7 L488.1,303.3 L487.7,301.8 L487.3,299.8 L486.9,297.1 L486.5,294.0 L486.1,290.1 L485.7,284.9 L485.3,278.9 L484.9,271.1 L484.5,261.4 L484.5,262.1 L483.4,261.2 L481.9,261.8 L480.4,261.5 L478.9,261.6 L477.4,261.7 L475.9,261.6 L474.4,261.3 L472.9,261.7 L471.4,261.7 L469.9,261.6 L468.4,261.5 L466.9,261.3 L465.4,261.4 L463.9,261.3 L462.4,261.7 L460.9,261.7 L459.4,261.8 L457.9,261.3 L456.4,261.3 L454.9,261.6 L453.4,261.4 L451.9,261.6 L450.4,261.5 L448.9,261.5 L447.4,261.8 L445.9,261.8 L444.4,261.7 L442.9,261.7 L441.4,261.7 L439.9,261.4 L438.4,261.3 L436.9,261.6 L435.4,261.5 L433.9,261.3 L432.4,261.7 L430.9,261.5 L429.4,261.4 L427.9,261.5 L426.4,261.3 L424.9,261.3 L423.4,261.6 L421.9,261.4 L420.4,261.5 L418.9,261.8 L417.4,261.4 L415.9,261.4 L414.4,261.5 L412.9,261.4 L411.4,261.2 L409.9,261.6 L408.4,261.2 L406.9,261.6 L405.4,261.7 L403.9,261.7 L402.4,261.8 L400.9,261.4 L399.4,261.4 L397.9,261.8 L396.4,261.3 L394.9,261.5 L393.4,261.7 L391.9,261.2 L390.4,261.5 L388.9,261.3 L387.4,261.4 L385.9,261.5 L384.4,261.3 L382.9,261.3 L381.4,261.2 L379.9,261.6 L378.4,261.7 L376.9,261.3 L375.4,261.2 L373.9,261.3 L372.4,261.7 L370.9,261.6 L369.4,261.2 L367.9,261.7 L366.4,261.5 L364.9,261.6 L363.4,261.4 L361.9,261.6 L360.4,261.6 L358.9,261.6 L357.4,261.2 L355.9,261.3 L354.4,261.4 L352.9,261.7 L351.4,261.8 L349.9,261.8 L348.4,261.4 L346.9,261.4 L345.4,261.5 L343.9,261.6 L342.4,261.5 L340.9,261.4 L339.4,261.9 L337.9,261.2 L336.4,261.4 L334.9,261.2 L333.4,261.6 L331.9,261.1 L330.4,261.8 L328.9,261.4 L327.4,261.3 L325.9,261.4 L324.4,261.7 L322.9,261.6 L321.4,261.6 L319.9,261.6 L318.4,261.2 L316.9,261.7 L315.4,261.3 L313.9,261.4 L312.4,261.5 L310.9,261.2 L309.4,261.4 L307.9,261.8 L306.4,261.3 L304.9,261.6 L303.4,261.4 L301.9,261.6 L300.4,261.4 L298.9,261.7 L297.4,261.4 L295.9,261.4 L294.4,261.3 L292.9,261.8 L291.4,261.7 L289.9,261.2 L288.4,261.3 L286.9,261.3 L285.4,261.8 L283.9,261.4 L282.4,261.7 L280.9,261.2 L279.4,261.6 L277.9,261.6 L276.4,261.5 L274.9,261.6 L273.4,261.4 L271.9,261.5 L270.4,261.2 L268.9,261.5 L267.4,261.7 L265.9,261.5 L264.4,261.6 L262.9,261.4 L261.4,261.4 L259.9,261.6 L258.4,261.3 L256.9,261.4 L255.4,261.3 L253.9,261.6 L252.4,261.4 L252.1,261.5 L251.8,261.7 L251.5,261.5 L251.2,261.3 L250.9,261.6 L250.6,261.9 L250.3,261.9 L250.0,261.7 L249.7,261.7 L249.4,261.8 L249.1,261.6 L248.8,262.0 L248.5,261.8 L248.2,261.8 L247.9,261.8 L247.6,261.9 L247.3,262.1 L247.0,261.9 L246.7,262.0 L246.4,262.2 L246.1,262.1 L245.8,262.1 L245.5,262.4 L245.2,262.5 L244.9,262.5 L244.6,262.7 L244.3,262.6 L244.0,263.0 L243.7,263.1 L243.4,263.0 L243.1,263.2 L242.8,263.5 L242.5,263.8 L242.2,264.0 L241.9,264.3 L241.6,264.8 L241.3,265.2 L241.0,266.0 L240.7,267.0 L240.4,268.0 L240.1,269.8 L239.8,272.1 L239.5,275.2 L239.2,279.8 L238.9,286.7 L238.6,296.6 L238.3,311.3 L238.3,311.5 L237.0,311.4 L235.5,311.5 L234.0,311.7 L232.5,311.2 L231.0,311.1 L229.5,311.1 L228.0,311.1 L226.5,311.6 L225.0,311.7 L223.5,311.7 L222.0,311.2 L220.5,311.7 L219.0,311.6 L217.5,311.4 L216.0,311.3 L214.5,311.5 L213.0,311.2 L211.5,311.4 L210.0,311.4 L208.5,311.5 L207.0,311.4 L205.5,311.1 L204.0,310.9 L202.5,311.1 L201.0,311.3 L199.5,311.5 L198.0,311.0 L196.5,311.2 L195.0,311.2 L193.5,311.7 L192.0,311.1 L190.5,311.5 L189.0,311.3 L187.5,311.4 L186.0,311.3 L184.5,311.5 L183.0,311.2 L181.5,311.6 L180.0,311.4 L178.5,311.6 L177.0,311.5 L175.5,311.7 L174.0,311.4 L172.5,311.5 L171.0,311.4 L169.5,311.7 L168.0,311.1 L166.5,311.2 L165.0,311.6 L163.5,311.1 L162.0,311.5 L160.5,311.8 L159.0,311.5 L157.5,311.1 L156.0,311.2 L154.5,311.1 L153.0,311.5 L151.5,311.1 L150.0,311.5 L148.5,311.4 L147.0,311.2 L145.5,311.3 L144.0,311.4 L142.5,311.2 L141.0,311.4 L139.5,311.3 L138.0,311.5 L136.5,311.6 L135.0,311.5 L133.5,311.4 L132.0,311.3 L130.5,311.1 L129.0,311.2 L127.5,311.1 L126.0,311.2 L124.5,311.3 L123.0,311.4 L121.5,311.2 L120.0,311.5 L118.5,311.5 L117.0,311.1 L115.5,311.3 L114.0,311.5 L112.5,311.7 L111.0,311.0 L109.5,311.2 L108.0,311.2 L106.5,311.1 L105.0,311.7 L103.5,311.4 L102.0,311.4 L100.5,311.3 L99.0,311.0 L97.5,311.2 L96.0,311.6 L94.5,311.2 L93.0,311.0 L91.5,311.5 L90.0,311.2 L88.5,311.1 L87.0,311.2 L85.5,311.5 L84.0,311.1 L82.5,311.5 L81.0,311.2 L79.5,311.4 L78.0,311.7 L76.5,311.4 L75.0,311.5 L73.5,311.4 L72.0,311.4 L70.5,311.5 L69.0,311.1 L67.5,311.3 L66.0,311.3 L64.5,311.6 L63.0,311.6 L61.5,311.6 L60.0,311.0 L58.5,311.3 L57.0,311.0 L55.5,311.7 L54.0,311.2 L52.5,311.3 L51.0,311.6 L49.5,311.2 L48.0,311.4 L46.5,311.5 L45.0,311.3 L43.5,311.3 L42.0,311.1 L40.5,311.2 L39.0,311.0 L37.5,311.1 L36.0,311.4 L34.5,311.2 L33.0,311.1 L31.5,311.6 L30.0,311.3 L28.5,311.4 L27.0,311.5 L25.5,311.1 L24.0,311.1 L22.5,311.0 L21.0,311.2 L19.5,311.3 L18.0,311.4 L16.5,311.7 L15.0,311.3 L13.5,311.3 L12.0,311.5Z" fill="#1fc4d6" stroke="#1fc4d6" stroke-width="0.8" stroke-linejoin="round"/><path d="M12.0,308.8 L13.5,308.8 L15.0,308.8 L16.5,308.4 L18.0,308.5 L19.5,308.8 L21.0,308.3 L22.5,308.3 L24.0,308.6 L25.5,308.5 L27.0,308.8 L28.5,308.7 L30.0,308.6 L31.5,308.8 L33.0,308.6 L34.5,308.6 L36.0,308.7 L37.5,308.5 L39.0,308.5 L40.5,308.6 L42.0,308.5 L43.5,308.8 L45.0,308.7 L46.5,308.6 L48.0,308.3 L49.5,308.5 L51.0,308.5 L52.5,308.6 L54.0,308.6 L55.5,308.8 L57.0,308.8 L58.5,308.5 L60.0,308.5 L61.5,308.6 L63.0,308.8 L64.5,308.5 L66.0,308.6 L67.5,308.7 L69.0,308.4 L70.5,308.4 L72.0,308.8 L73.5,308.7 L75.0,308.6 L76.5,308.3 L78.0,308.8 L79.5,308.7 L81.0,308.7 L82.5,308.8 L84.0,308.8 L85.5,308.5 L87.0,308.3 L88.5,308.4 L90.0,308.6 L91.5,308.6 L93.0,308.4 L94.5,308.4 L96.0,308.6 L97.5,308.6 L99.0,308.5 L100.5,308.8 L102.0,308.6 L103.5,308.3 L105.0,308.5 L106.5,308.7 L108.0,308.4 L109.5,308.7 L111.0,308.3 L112.5,308.4 L114.0,308.8 L115.5,308.6 L117.0,308.7 L118.5,308.4 L120.0,308.5 L121.5,308.6 L123.0,308.4 L124.5,308.6 L126.0,308.6 L127.5,308.8 L129.0,308.6 L130.5,308.5 L132.0,308.3 L133.5,308.3 L135.0,308.7 L136.5,308.3 L138.0,308.3 L139.5,308.4 L141.0,308.6 L142.5,308.7 L144.0,308.6 L145.5,308.7 L147.0,308.3 L148.5,308.3 L150.0,308.7 L151.5,308.4 L153.0,308.7 L154.5,308.5 L156.0,308.4 L157.5,308.4 L159.0,308.3 L160.5,308.8 L162.0,308.6 L163.5,308.5 L165.0,308.5 L166.5,308.5 L168.0,308.3 L169.5,308.8 L171.0,308.6 L172.5,308.8 L174.0,308.5 L175.5,308.6 L177.0,308.4 L178.5,308.3 L180.0,308.8 L181.5,308.8 L183.0,308.4 L184.5,308.8 L186.0,308.7 L187.5,308.4 L189.0,308.6 L190.5,308.8 L192.0,308.5 L193.5,308.8 L195.0,308.4 L196.5,308.5 L198.0,308.7 L199.5,308.4 L201.0,308.4 L202.5,308.8 L204.0,308.5 L205.5,308.7 L207.0,308.4 L208.5,308.4 L210.0,308.5 L211.5,308.4 L213.0,308.8 L214.5,308.4 L216.0,308.6 L217.5,308.3 L219.0,308.6 L220.5,308.5 L222.0,308.5 L223.5,308.3 L225.0,308.3 L226.5,308.7 L228.0,308.5 L229.5,308.4 L231.0,308.4 L232.5,308.4 L234.0,308.4 L235.5,308.3 L237.0,308.6 L238.3,308.6 L238.3,308.6 L238.6,279.8 L238.9,260.1 L239.2,246.7 L239.5,237.1 L239.8,230.6 L240.1,226.1 L240.4,222.9 L240.7,220.5 L241.0,218.8 L241.3,217.5 L241.6,216.4 L241.9,215.6 L242.2,215.0 L242.5,214.4 L242.8,214.0 L243.1,213.6 L243.4,213.2 L243.7,212.9 L244.0,212.7 L244.3,212.4 L244.6,212.2 L244.9,212.0 L245.2,211.8 L245.5,211.7 L245.8,211.5 L246.1,211.4 L246.4,211.3 L246.7,211.2 L247.0,211.1 L247.3,211.0 L247.6,210.9 L247.9,210.8 L248.2,210.7 L248.5,210.7 L248.8,210.6 L249.1,210.6 L249.4,210.5 L249.7,210.5 L250.0,210.4 L250.3,210.3 L250.6,210.1 L250.9,210.4 L251.2,210.1 L251.5,210.1 L251.8,210.4 L252.1,210.0 L252.4,210.2 L253.9,210.3 L255.4,210.3 L256.9,209.8 L258.4,209.9 L259.9,210.2 L261.4,209.9 L262.9,210.3 L264.4,209.8 L265.9,210.3 L267.4,210.0 L268.9,209.8 L270.4,210.0 L271.9,209.8 L273.4,210.1 L274.9,209.9 L276.4,210.2 L277.9,210.1 L279.4,209.9 L280.9,209.8 L282.4,210.1 L283.9,209.8 L285.4,210.2 L286.9,209.8 L288.4,210.0 L289.9,210.0 L291.4,209.9 L292.9,210.2 L294.4,209.9 L295.9,210.1 L297.4,210.0 L298.9,209.9 L300.4,209.9 L301.9,209.8 L303.4,209.8 L304.9,210.2 L306.4,209.9 L307.9,210.1 L309.4,209.8 L310.9,210.0 L312.4,209.9 L313.9,210.0 L315.4,209.9 L316.9,209.7 L318.4,209.9 L319.9,209.8 L321.4,209.8 L322.9,210.1 L324.4,209.9 L325.9,209.9 L327.4,210.2 L328.9,210.2 L330.4,210.2 L331.9,210.2 L333.4,209.8 L334.9,209.9 L336.4,209.7 L337.9,210.1 L339.4,210.1 L340.9,209.9 L342.4,209.9 L343.9,210.1 L345.4,210.1 L346.9,209.8 L348.4,210.2 L349.9,209.9 L351.4,210.1 L352.9,209.8 L354.4,209.8 L355.9,210.2 L357.4,210.1 L358.9,210.1 L360.4,209.7 L361.9,209.7 L363.4,209.8 L364.9,209.8 L366.4,209.9 L367.9,209.9 L369.4,209.7 L370.9,209.9 L372.4,210.1 L373.9,209.8 L375.4,210.2 L376.9,210.0 L378.4,210.1 L379.9,209.9 L381.4,210.0 L382.9,210.1 L384.4,209.9 L385.9,209.7 L387.4,210.2 L388.9,210.2 L390.4,209.9 L391.9,209.7 L393.4,210.2 L394.9,210.1 L396.4,209.7 L397.9,209.8 L399.4,209.8 L400.9,210.2 L402.4,209.8 L403.9,210.2 L405.4,210.1 L406.9,209.8 L408.4,210.1 L409.9,209.9 L411.4,210.1 L412.9,210.2 L414.4,209.9 L415.9,209.8 L417.4,210.3 L418.9,210.0 L420.4,210.3 L421.9,210.1 L423.4,210.1 L424.9,210.2 L426.4,210.1 L427.9,210.0 L429.4,209.7 L430.9,210.1 L432.4,210.0 L433.9,210.0 L435.4,210.3 L436.9,209.8 L438.4,210.2 L439.9,209.7 L441.4,210.1 L442.9,210.2 L444.4,209.9 L445.9,210.0 L447.4,210.3 L448.9,210.1 L450.4,210.0 L451.9,209.8 L453.4,209.7 L454.9,209.9 L456.4,209.9 L457.9,209.8 L459.4,209.9 L460.9,209.8 L462.4,210.1 L463.9,210.1 L465.4,209.8 L466.9,209.8 L468.4,210.0 L469.9,210.0 L471.4,210.3 L472.9,209.9 L474.4,209.9 L475.9,210.2 L477.4,209.8 L478.9,210.0 L480.4,209.9 L481.9,210.2 L483.4,210.0 L484.5,210.5 L484.5,210.0 L484.9,228.9 L485.3,243.9 L485.7,256.0 L486.1,265.6 L486.5,273.4 L486.9,279.6 L487.3,284.7 L487.7,288.8 L488.1,292.1 L488.5,294.8 L488.9,297.0 L489.3,298.8 L489.7,300.3 L490.1,301.6 L490.5,302.6 L490.9,303.5 L491.3,304.2 L491.7,304.8 L492.1,305.3 L492.5,305.7 L492.9,306.0 L493.3,306.4 L493.7,307.0 L494.1,307.2 L494.5,307.4 L494.9,307.5 L495.3,307.7 L495.7,307.8 L496.1,307.9 L496.5,308.0 L496.9,308.0 L497.3,308.1 L497.7,308.2 L498.1,308.2 L498.5,308.3 L498.9,308.5 L499.3,308.1 L499.7,308.5 L500.1,308.4 L500.5,308.4 L500.9,308.6 L502.4,308.7 L503.9,308.3 L505.4,308.4 L506.9,308.4 L508.4,308.4 L509.9,308.3 L511.4,308.4 L512.9,308.4 L514.4,308.7 L515.9,308.5 L517.4,308.3 L518.9,308.4 L520.4,308.5 L521.9,308.5 L523.4,308.4 L524.9,308.3 L526.4,308.3 L527.9,308.8 L529.4,308.7 L530.9,308.3 L532.4,308.7 L533.9,308.8 L535.4,308.6 L536.9,308.3 L538.4,308.5 L539.9,308.5 L541.4,308.4 L542.9,308.6 L544.4,308.3 L545.9,308.8 L547.4,308.6 L548.9,308.6 L550.4,308.8 L551.9,308.6 L553.4,308.4 L554.9,308.4 L556.4,308.3 L557.9,308.3 L559.4,308.7 L560.9,308.8 L562.4,308.4 L563.9,308.4 L565.4,308.6 L566.9,308.8 L568.4,308.8 L569.9,308.4 L571.4,308.7 L572.9,308.7 L574.4,308.7 L575.9,308.4 L577.4,308.4 L578.9,308.7 L580.4,308.4 L581.9,308.5 L583.4,308.6 L584.9,308.5 L586.4,308.7 L587.9,308.4 L589.4,308.3 L590.9,308.6 L592.4,308.6 L593.9,308.7 L595.4,308.7 L596.9,308.8 L598.4,308.8 L599.9,308.5 L601.4,308.5 L602.9,308.3 L604.4,308.4 L605.9,308.6 L607.4,308.3 L608.9,308.7 L610.4,308.3 L611.9,308.5 L613.4,308.8 L614.9,308.3 L616.4,308.3 L617.9,308.5 L619.4,308.4 L620.9,308.7 L622.4,308.3 L623.9,308.8 L625.4,308.8 L626.9,308.7 L628.4,308.5 L629.9,308.4 L631.4,308.6 L632.9,308.6 L634.4,308.5 L635.9,308.5 L637.4,308.5 L638.9,308.6 L640.4,308.7 L641.9,308.8 L643.4,308.3 L644.9,308.4 L646.4,308.5 L647.9,308.6 L649.4,308.5 L650.9,308.4 L652.4,308.3 L653.9,308.4 L655.4,308.5 L656.9,308.8 L658.4,308.8 L659.9,308.8 L661.4,308.8 L662.9,308.8 L664.4,308.6 L665.9,308.7 L667.4,308.3 L668.9,308.7 L670.4,308.6 L671.9,308.4 L673.4,308.6 L674.9,308.8 L676.4,308.5 L677.9,308.6 L679.4,308.4 L680.9,308.5 L682.4,308.8 L683.9,308.3 L685.4,308.4 L686.9,308.7 L688.4,308.5 L689.9,308.3 L691.4,308.6 L692.9,308.5 L694.4,308.6 L695.9,308.5 L697.4,308.6 L698.9,308.6 L700.4,308.5 L701.9,308.3 L703.4,308.4 L704.9,308.8 L706.4,308.6 L707.9,308.3 L709.4,308.8 L710.9,308.4 L712.4,308.3 L713.9,308.6 L715.4,308.4 L716.9,308.5 L718.4,308.6 L719.9,308.4 L721.4,308.6 L722.9,308.3 L724.4,308.6 L725.9,308.6 L727.4,308.3 L728.9,308.5 L730.4,308.3 L731.9,308.5 L733.4,308.8 L734.9,308.6 L736.4,308.7 L737.9,308.7 L739.4,308.3 L740.9,308.8 L742.4,308.7 L743.9,308.3 L745.4,308.7 L746.9,308.5 L748.4,308.4 L749.9,308.8 L751.4,308.6 L752.9,308.7 L754.4,308.3 L755.9,308.7 L757.4,308.3 L757.4,311.0 L755.9,311.5 L754.4,311.0 L752.9,311.5 L751.4,311.3 L749.9,311.6 L748.4,311.2 L746.9,311.3 L745.4,311.7 L743.9,311.1 L742.4,311.6 L740.9,311.7 L739.4,311.2 L737.9,311.6 L736.4,311.4 L734.9,311.5 L733.4,311.5 L731.9,311.4 L730.4,311.1 L728.9,311.4 L727.4,311.0 L725.9,311.4 L724.4,311.4 L722.9,311.3 L721.4,311.5 L719.9,311.0 L718.4,311.4 L716.9,311.2 L715.4,311.2 L713.9,311.5 L712.4,311.0 L710.9,311.3 L709.4,311.6 L707.9,311.0 L706.4,311.3 L704.9,311.6 L703.4,311.3 L701.9,311.1 L700.4,311.2 L698.9,311.2 L697.4,311.3 L695.9,311.4 L694.4,311.3 L692.9,311.3 L691.4,311.4 L689.9,311.2 L688.4,311.3 L686.9,311.4 L685.4,311.3 L683.9,311.1 L682.4,311.6 L680.9,311.3 L679.4,311.4 L677.9,311.3 L676.4,311.3 L674.9,311.5 L673.4,311.4 L671.9,311.3 L670.4,311.5 L668.9,311.3 L667.4,311.0 L665.9,311.6 L664.4,311.5 L662.9,311.6 L661.4,311.6 L659.9,311.5 L658.4,311.7 L656.9,311.6 L655.4,311.4 L653.9,311.3 L652.4,311.0 L650.9,311.1 L649.4,311.2 L647.9,311.5 L646.4,311.3 L644.9,311.1 L643.4,311.0 L641.9,311.6 L640.4,311.5 L638.9,311.5 L637.4,311.3 L635.9,311.2 L634.4,311.2 L632.9,311.4 L631.4,311.4 L629.9,311.1 L628.4,311.3 L626.9,311.7 L625.4,311.4 L623.9,311.4 L622.4,311.1 L620.9,311.4 L619.4,311.1 L617.9,311.3 L616.4,311.0 L614.9,311.1 L613.4,311.6 L611.9,311.5 L610.4,311.3 L608.9,311.3 L607.4,311.1 L605.9,311.5 L604.4,311.3 L602.9,311.2 L601.4,311.4 L599.9,311.4 L598.4,311.6 L596.9,311.5 L595.4,311.6 L593.9,311.7 L592.4,311.6 L590.9,311.4 L589.4,311.0 L587.9,311.3 L586.4,311.6 L584.9,311.3 L583.4,311.4 L581.9,311.2 L580.4,311.3 L578.9,311.5 L577.4,311.0 L575.9,311.2 L574.4,311.4 L572.9,311.7 L571.4,311.5 L569.9,311.1 L568.4,311.5 L566.9,311.5 L565.4,311.4 L563.9,311.1 L562.4,311.1 L560.9,311.7 L559.4,311.5 L557.9,311.1 L556.4,311.2 L554.9,311.1 L553.4,311.1 L551.9,311.3 L550.4,311.6 L548.9,311.4 L547.4,311.5 L545.9,311.6 L544.4,311.2 L542.9,311.3 L541.4,311.3 L539.9,311.3 L538.4,311.2 L536.9,311.0 L535.4,311.4 L533.9,311.8 L532.4,311.4 L530.9,311.2 L529.4,311.5 L527.9,311.8 L526.4,310.9 L524.9,311.1 L523.4,311.3 L521.9,311.2 L520.4,311.3 L518.9,311.1 L517.4,311.0 L515.9,311.2 L514.4,311.5 L512.9,311.1 L511.4,311.2 L509.9,311.0 L508.4,311.2 L506.9,311.4 L505.4,311.2 L503.9,311.0 L502.4,311.5 L500.9,311.5 L500.5,311.2 L500.1,311.1 L499.7,311.4 L499.3,311.0 L498.9,311.2 L498.5,311.0 L498.1,310.9 L497.7,311.0 L497.3,311.0 L496.9,310.9 L496.5,310.9 L496.1,310.6 L495.7,310.5 L495.3,310.5 L494.9,310.4 L494.5,310.1 L494.1,310.0 L493.7,309.7 L493.3,309.7 L492.9,309.5 L492.5,309.1 L492.1,308.8 L491.7,308.2 L491.3,307.7 L490.9,307.0 L490.5,306.0 L490.1,305.1 L489.7,303.7 L489.3,302.5 L488.9,300.5 L488.5,298.4 L488.1,295.4 L487.7,292.3 L487.3,288.2 L486.9,283.1 L486.5,276.8 L486.1,269.0 L485.7,259.4 L485.3,247.5 L484.9,232.3 L484.5,213.6 L484.5,214.0 L483.4,213.5 L481.9,213.7 L480.4,213.4 L478.9,213.6 L477.4,213.3 L475.9,213.7 L474.4,213.5 L472.9,213.3 L471.4,213.8 L469.9,213.5 L468.4,213.6 L466.9,213.3 L465.4,213.4 L463.9,213.7 L462.4,213.6 L460.9,213.2 L459.4,213.4 L457.9,213.5 L456.4,213.3 L454.9,213.3 L453.4,213.2 L451.9,213.4 L450.4,213.6 L448.9,213.5 L447.4,213.9 L445.9,213.4 L444.4,213.4 L442.9,213.6 L441.4,213.5 L439.9,213.1 L438.4,213.5 L436.9,213.3 L435.4,213.8 L433.9,213.4 L432.4,213.6 L430.9,213.6 L429.4,213.1 L427.9,213.4 L426.4,213.6 L424.9,213.8 L423.4,213.5 L421.9,213.5 L420.4,213.8 L418.9,213.4 L417.4,213.9 L415.9,213.3 L414.4,213.4 L412.9,213.7 L411.4,213.7 L409.9,213.4 L408.4,213.6 L406.9,213.4 L405.4,213.5 L403.9,213.8 L402.4,213.2 L400.9,213.7 L399.4,213.2 L397.9,213.5 L396.4,213.1 L394.9,213.6 L393.4,213.7 L391.9,213.4 L390.4,213.5 L388.9,213.7 L387.4,213.6 L385.9,213.1 L384.4,213.3 L382.9,213.6 L381.4,213.4 L379.9,213.3 L378.4,213.7 L376.9,213.6 L375.4,213.6 L373.9,213.5 L372.4,213.5 L370.9,213.4 L369.4,213.1 L367.9,213.5 L366.4,213.5 L364.9,213.2 L363.4,213.4 L361.9,213.3 L360.4,213.2 L358.9,213.6 L357.4,213.6 L355.9,213.9 L354.4,213.2 L352.9,213.4 L351.4,213.6 L349.9,213.4 L348.4,213.7 L346.9,213.5 L345.4,213.5 L343.9,213.7 L342.4,213.4 L340.9,213.5 L339.4,213.7 L337.9,213.5 L336.4,213.3 L334.9,213.5 L333.4,213.2 L331.9,213.6 L330.4,213.6 L328.9,213.8 L327.4,213.6 L325.9,213.6 L324.4,213.3 L322.9,213.7 L321.4,213.2 L319.9,213.2 L318.4,213.4 L316.9,213.1 L315.4,213.3 L313.9,213.6 L312.4,213.5 L310.9,213.7 L309.4,213.4 L307.9,213.5 L306.4,213.3 L304.9,213.8 L303.4,213.4 L301.9,213.1 L300.4,213.4 L298.9,213.3 L297.4,213.5 L295.9,213.5 L294.4,213.3 L292.9,213.8 L291.4,213.3 L289.9,213.6 L288.4,213.4 L286.9,213.3 L285.4,213.6 L283.9,213.3 L282.4,213.5 L280.9,213.4 L279.4,213.3 L277.9,213.6 L276.4,213.7 L274.9,213.2 L273.4,213.6 L271.9,213.3 L270.4,213.6 L268.9,213.3 L267.4,213.4 L265.9,213.9 L264.4,213.4 L262.9,213.9 L261.4,213.4 L259.9,213.6 L258.4,213.4 L256.9,213.2 L255.4,213.6 L253.9,213.8 L252.4,213.6 L252.1,213.5 L251.8,213.9 L251.5,213.5 L251.2,213.6 L250.9,214.0 L250.6,213.7 L250.3,213.8 L250.0,214.0 L249.7,214.1 L249.4,214.1 L249.1,214.1 L248.8,214.1 L248.5,214.1 L248.2,214.2 L247.9,214.4 L247.6,214.3 L247.3,214.4 L247.0,214.5 L246.7,214.5 L246.4,214.9 L246.1,214.7 L245.8,215.1 L245.5,215.3 L245.2,215.3 L244.9,215.5 L244.6,215.7 L244.3,215.8 L244.0,216.1 L243.7,216.3 L243.4,216.8 L243.1,217.2 L242.8,217.6 L242.5,217.8 L242.2,218.5 L241.9,219.1 L241.6,220.0 L241.3,221.0 L241.0,222.2 L240.7,224.2 L240.4,226.2 L240.1,229.7 L239.8,234.3 L239.5,240.6 L239.2,249.5 L238.9,263.1 L238.6,282.5 L238.3,311.4 L238.3,311.4 L237.0,311.4 L235.5,311.1 L234.0,311.2 L232.5,311.2 L231.0,311.2 L229.5,311.3 L228.0,311.2 L226.5,311.6 L225.0,311.1 L223.5,311.0 L222.0,311.3 L220.5,311.2 L219.0,311.5 L217.5,311.1 L216.0,311.5 L214.5,311.2 L213.0,311.6 L211.5,311.1 L210.0,311.2 L208.5,311.3 L207.0,311.2 L205.5,311.5 L204.0,311.3 L202.5,311.7 L201.0,311.2 L199.5,311.1 L198.0,311.6 L196.5,311.3 L195.0,311.2 L193.5,311.7 L192.0,311.5 L190.5,311.7 L189.0,311.3 L187.5,311.2 L186.0,311.6 L184.5,311.7 L183.0,311.1 L181.5,311.5 L180.0,311.5 L178.5,311.0 L177.0,311.2 L175.5,311.5 L174.0,311.3 L172.5,311.6 L171.0,311.3 L169.5,311.6 L168.0,311.2 L166.5,311.3 L165.0,311.3 L163.5,311.3 L162.0,311.5 L160.5,311.7 L159.0,311.0 L157.5,311.3 L156.0,311.1 L154.5,311.3 L153.0,311.4 L151.5,311.2 L150.0,311.5 L148.5,311.0 L147.0,310.9 L145.5,311.4 L144.0,311.4 L142.5,311.4 L141.0,311.3 L139.5,311.2 L138.0,311.0 L136.5,311.1 L135.0,311.4 L133.5,311.2 L132.0,311.0 L130.5,311.3 L129.0,311.5 L127.5,311.6 L126.0,311.3 L124.5,311.5 L123.0,311.2 L121.5,311.3 L120.0,311.2 L118.5,311.2 L117.0,311.4 L115.5,311.5 L114.0,311.5 L112.5,311.2 L111.0,311.1 L109.5,311.6 L108.0,311.2 L106.5,311.5 L105.0,311.3 L103.5,311.2 L102.0,311.3 L100.5,311.8 L99.0,311.3 L97.5,311.4 L96.0,311.5 L94.5,311.1 L93.0,311.0 L91.5,311.4 L90.0,311.3 L88.5,311.2 L87.0,311.1 L85.5,311.4 L84.0,311.7 L82.5,311.5 L81.0,311.6 L79.5,311.5 L78.0,311.6 L76.5,311.2 L75.0,311.3 L73.5,311.5 L72.0,311.8 L70.5,311.2 L69.0,311.1 L67.5,311.5 L66.0,311.5 L64.5,311.3 L63.0,311.7 L61.5,311.4 L60.0,311.2 L58.5,311.4 L57.0,311.6 L55.5,311.7 L54.0,311.5 L52.5,311.3 L51.0,311.2 L49.5,311.1 L48.0,311.2 L46.5,311.2 L45.0,311.3 L43.5,311.7 L42.0,311.3 L40.5,311.3 L39.0,311.3 L37.5,311.3 L36.0,311.5 L34.5,311.2 L33.0,311.4 L31.5,311.6 L30.0,311.4 L28.5,311.7 L27.0,311.7 L25.5,311.5 L24.0,311.3 L22.5,311.0 L21.0,311.1 L19.5,311.4 L18.0,311.5 L16.5,311.1 L15.0,311.6 L13.5,311.5 L12.0,311.5Z" fill="#ee2d57" stroke="#ee2d57" stroke-width="0.8" stroke-linejoin="round"/><path d="M12.0,308.8 L13.5,308.6 L15.0,308.6 L16.5,308.5 L18.0,308.3 L19.5,308.4 L21.0,308.8 L22.5,308.7 L24.0,308.8 L25.5,308.4 L27.0,308.4 L28.5,308.3 L30.0,308.6 L31.5,308.5 L33.0,308.5 L34.5,308.5 L36.0,308.6 L37.5,308.5 L39.0,308.7 L40.5,308.4 L42.0,308.8 L43.5,308.6 L45.0,308.3 L46.5,308.4 L48.0,308.6 L49.5,308.5 L51.0,308.6 L52.5,308.4 L54.0,308.4 L55.5,308.7 L57.0,308.4 L58.5,308.7 L60.0,308.7 L61.5,308.6 L63.0,308.5 L64.5,308.8 L66.0,308.5 L67.5,308.8 L69.0,308.3 L70.5,308.5 L72.0,308.6 L73.5,308.3 L75.0,308.8 L76.5,308.3 L78.0,308.6 L79.5,308.4 L81.0,308.8 L82.5,308.6 L84.0,308.7 L85.5,308.5 L87.0,308.7 L88.5,308.7 L90.0,308.4 L91.5,308.4 L93.0,308.8 L94.5,308.3 L96.0,308.8 L97.5,308.4 L99.0,308.3 L100.5,308.3 L102.0,308.7 L103.5,308.8 L105.0,308.5 L106.5,308.6 L108.0,308.4 L109.5,308.8 L111.0,308.7 L112.5,308.3 L114.0,308.3 L115.5,308.7 L117.0,308.3 L118.5,308.8 L120.0,308.4 L121.5,308.4 L123.0,308.6 L124.5,308.4 L126.0,308.6 L127.5,308.3 L129.0,308.8 L130.5,308.4 L132.0,308.8 L133.5,308.3 L135.0,308.7 L136.5,308.8 L138.0,308.5 L139.5,308.3 L141.0,308.5 L142.5,308.6 L144.0,308.4 L145.5,308.6 L147.0,308.3 L148.5,308.5 L150.0,308.7 L151.5,308.5 L153.0,308.7 L154.5,308.3 L156.0,308.7 L157.5,308.3 L159.0,308.8 L160.5,308.8 L162.0,308.8 L163.5,308.6 L165.0,308.4 L166.5,308.5 L168.0,308.7 L169.5,308.5 L171.0,308.8 L172.5,308.3 L174.0,308.5 L175.5,308.8 L177.0,308.6 L178.5,308.6 L180.0,308.3 L181.5,308.3 L183.0,308.4 L184.5,308.8 L186.0,308.8 L187.5,308.4 L189.0,308.8 L190.5,308.3 L192.0,308.6 L193.5,308.8 L195.0,308.5 L196.5,308.8 L198.0,308.6 L199.5,308.3 L201.0,308.4 L202.5,308.5 L204.0,308.4 L205.5,308.7 L207.0,308.4 L208.5,308.7 L210.0,308.4 L211.5,308.3 L213.0,308.6 L214.5,308.3 L216.0,308.6 L217.5,308.7 L219.0,308.6 L220.5,308.5 L222.0,308.3 L223.5,308.6 L225.0,308.3 L226.5,308.6 L228.0,308.3 L229.5,308.6 L231.0,308.5 L232.5,308.5 L234.0,308.6 L235.5,308.3 L237.0,308.4 L238.3,308.6 L238.3,308.6 L238.6,265.1 L238.9,235.6 L239.2,215.3 L239.5,201.0 L239.8,191.3 L240.1,184.5 L240.4,179.6 L240.7,176.1 L241.0,173.4 L241.3,171.4 L241.6,169.9 L241.9,168.7 L242.2,167.7 L242.5,166.9 L242.8,166.2 L243.1,165.6 L243.4,165.1 L243.7,164.6 L244.0,164.2 L244.3,163.8 L244.6,163.5 L244.9,163.2 L245.2,163.0 L245.5,162.7 L245.8,162.5 L246.1,162.3 L246.4,162.1 L246.7,161.9 L247.0,161.8 L247.3,161.7 L247.6,161.5 L247.9,161.4 L248.2,161.3 L248.5,161.2 L248.8,161.1 L249.1,161.0 L249.4,161.0 L249.7,160.9 L250.0,160.8 L250.3,161.0 L250.6,160.6 L250.9,160.9 L251.2,160.9 L251.5,160.6 L251.8,160.4 L252.1,160.3 L252.4,160.7 L253.9,160.2 L255.4,160.3 L256.9,160.3 L258.4,160.0 L259.9,160.2 L261.4,160.0 L262.9,160.2 L264.4,160.2 L265.9,160.1 L267.4,160.0 L268.9,160.1 L270.4,160.0 L271.9,160.0 L273.4,160.0 L274.9,160.4 L276.4,160.2 L277.9,160.4 L279.4,159.9 L280.9,160.5 L282.4,160.2 L283.9,160.4 L285.4,160.2 L286.9,160.3 L288.4,160.0 L289.9,160.4 L291.4,160.0 L292.9,160.1 L294.4,159.9 L295.9,160.1 L297.4,160.2 L298.9,160.1 L300.4,160.4 L301.9,160.0 L303.4,160.2 L304.9,160.0 L306.4,160.3 L307.9,160.4 L309.4,160.3 L310.9,159.9 L312.4,160.0 L313.9,160.3 L315.4,160.5 L316.9,159.9 L318.4,160.3 L319.9,160.3 L321.4,160.4 L322.9,160.1 L324.4,160.4 L325.9,160.2 L327.4,160.5 L328.9,159.9 L330.4,160.5 L331.9,160.1 L333.4,160.1 L334.9,160.0 L336.4,160.0 L337.9,160.3 L339.4,160.3 L340.9,160.0 L342.4,160.1 L343.9,160.0 L345.4,160.0 L346.9,160.0 L348.4,160.1 L349.9,160.5 L351.4,160.5 L352.9,160.4 L354.4,160.2 L355.9,160.2 L357.4,160.4 L358.9,160.4 L360.4,160.4 L361.9,160.3 L363.4,160.0 L364.9,160.3 L366.4,160.4 L367.9,160.4 L369.4,160.0 L370.9,160.3 L372.4,160.1 L373.9,160.0 L375.4,160.5 L376.9,160.3 L378.4,160.3 L379.9,160.0 L381.4,160.4 L382.9,160.5 L384.4,160.4 L385.9,160.3 L387.4,160.4 L388.9,160.4 L390.4,160.3 L391.9,160.2 L393.4,160.4 L394.9,160.4 L396.4,160.4 L397.9,160.1 L399.4,160.5 L400.9,160.2 L402.4,160.5 L403.9,160.0 L405.4,160.5 L406.9,160.4 L408.4,160.1 L409.9,160.4 L411.4,160.0 L412.9,160.0 L414.4,160.2 L415.9,160.0 L417.4,160.2 L418.9,160.4 L420.4,160.3 L421.9,160.3 L423.4,160.1 L424.9,160.4 L426.4,160.4 L427.9,160.3 L429.4,160.5 L430.9,160.4 L432.4,160.1 L433.9,160.0 L435.4,160.3 L436.9,160.4 L438.4,160.1 L439.9,160.3 L441.4,160.4 L442.9,160.4 L444.4,159.9 L445.9,160.2 L447.4,159.9 L448.9,160.0 L450.4,160.4 L451.9,160.2 L453.4,160.3 L454.9,160.2 L456.4,160.1 L457.9,160.0 L459.4,160.1 L460.9,160.4 L462.4,160.3 L463.9,160.1 L465.4,160.0 L466.9,160.1 L468.4,160.3 L469.9,160.2 L471.4,160.3 L472.9,160.4 L474.4,160.0 L475.9,160.3 L477.4,159.9 L478.9,160.4 L480.4,160.0 L481.9,160.1 L483.4,160.5 L484.5,160.7 L484.5,160.2 L484.9,188.7 L485.3,211.4 L485.7,229.5 L486.1,244.0 L486.5,255.7 L486.9,265.1 L487.3,272.7 L487.7,278.9 L488.1,283.9 L488.5,288.0 L488.9,291.3 L489.3,294.1 L489.7,296.3 L490.1,298.2 L490.5,299.8 L490.9,301.0 L491.3,302.1 L491.7,303.0 L492.1,303.8 L492.5,304.4 L492.9,305.0 L493.3,305.4 L493.7,306.2 L494.1,306.5 L494.5,306.8 L494.9,307.0 L495.3,307.2 L495.7,307.4 L496.1,307.5 L496.5,307.7 L496.9,307.8 L497.3,307.9 L497.7,308.0 L498.1,308.1 L498.5,308.1 L498.9,308.1 L499.3,308.1 L499.7,308.5 L500.1,308.4 L500.5,308.6 L500.9,308.3 L502.4,308.4 L503.9,308.8 L505.4,308.5 L506.9,308.8 L508.4,308.3 L509.9,308.7 L511.4,308.3 L512.9,308.6 L514.4,308.2 L515.9,308.4 L517.4,308.8 L518.9,308.5 L520.4,308.7 L521.9,308.4 L523.4,308.5 L524.9,308.3 L526.4,308.6 L527.9,308.8 L529.4,308.6 L530.9,308.5 L532.4,308.8 L533.9,308.8 L535.4,308.6 L536.9,308.3 L538.4,308.6 L539.9,308.5 L541.4,308.8 L542.9,308.5 L544.4,308.6 L545.9,308.6 L547.4,308.5 L548.9,308.6 L550.4,308.7 L551.9,308.8 L553.4,308.5 L554.9,308.5 L556.4,308.8 L557.9,308.3 L559.4,308.8 L560.9,308.7 L562.4,308.6 L563.9,308.5 L565.4,308.7 L566.9,308.8 L568.4,308.7 L569.9,308.7 L571.4,308.3 L572.9,308.4 L574.4,308.3 L575.9,308.8 L577.4,308.8 L578.9,308.3 L580.4,308.6 L581.9,308.6 L583.4,308.3 L584.9,308.5 L586.4,308.7 L587.9,308.6 L589.4,308.4 L590.9,308.7 L592.4,308.4 L593.9,308.6 L595.4,308.5 L596.9,308.8 L598.4,308.6 L599.9,308.7 L601.4,308.7 L602.9,308.5 L604.4,308.8 L605.9,308.7 L607.4,308.7 L608.9,308.4 L610.4,308.3 L611.9,308.6 L613.4,308.7 L614.9,308.7 L616.4,308.5 L617.9,308.3 L619.4,308.6 L620.9,308.8 L622.4,308.3 L623.9,308.7 L625.4,308.4 L626.9,308.4 L628.4,308.3 L629.9,308.4 L631.4,308.5 L632.9,308.8 L634.4,308.8 L635.9,308.4 L637.4,308.4 L638.9,308.8 L640.4,308.4 L641.9,308.4 L643.4,308.5 L644.9,308.3 L646.4,308.4 L647.9,308.5 L649.4,308.5 L650.9,308.8 L652.4,308.4 L653.9,308.4 L655.4,308.8 L656.9,308.5 L658.4,308.8 L659.9,308.6 L661.4,308.7 L662.9,308.4 L664.4,308.3 L665.9,308.7 L667.4,308.5 L668.9,308.6 L670.4,308.7 L671.9,308.7 L673.4,308.4 L674.9,308.5 L676.4,308.8 L677.9,308.6 L679.4,308.4 L680.9,308.6 L682.4,308.4 L683.9,308.7 L685.4,308.3 L686.9,308.7 L688.4,308.6 L689.9,308.5 L691.4,308.8 L692.9,308.4 L694.4,308.4 L695.9,308.3 L697.4,308.6 L698.9,308.7 L700.4,308.7 L701.9,308.5 L703.4,308.7 L704.9,308.3 L706.4,308.4 L707.9,308.6 L709.4,308.8 L710.9,308.6 L712.4,308.7 L713.9,308.7 L715.4,308.5 L716.9,308.8 L718.4,308.7 L719.9,308.5 L721.4,308.5 L722.9,308.7 L724.4,308.5 L725.9,308.4 L727.4,308.8 L728.9,308.6 L730.4,308.6 L731.9,308.7 L733.4,308.8 L734.9,308.3 L736.4,308.5 L737.9,308.3 L739.4,308.5 L740.9,308.6 L742.4,308.8 L743.9,308.7 L745.4,308.6 L746.9,308.5 L748.4,308.6 L749.9,308.4 L751.4,308.8 L752.9,308.7 L754.4,308.8 L755.9,308.3 L757.4,308.7 L757.4,311.5 L755.9,311.1 L754.4,311.7 L752.9,311.6 L751.4,311.6 L749.9,311.3 L748.4,311.4 L746.9,311.4 L745.4,311.3 L743.9,311.5 L742.4,311.6 L740.9,311.4 L739.4,311.2 L737.9,311.0 L736.4,311.3 L734.9,311.2 L733.4,311.5 L731.9,311.4 L730.4,311.3 L728.9,311.2 L727.4,311.6 L725.9,311.3 L724.4,311.4 L722.9,311.5 L721.4,311.3 L719.9,311.1 L718.4,311.6 L716.9,311.6 L715.4,311.1 L713.9,311.6 L712.4,311.4 L710.9,311.4 L709.4,311.5 L707.9,311.4 L706.4,311.3 L704.9,311.2 L703.4,311.4 L701.9,311.4 L700.4,311.3 L698.9,311.4 L697.4,311.4 L695.9,311.0 L694.4,311.1 L692.9,311.2 L691.4,311.5 L689.9,311.4 L688.4,311.3 L686.9,311.6 L685.4,311.2 L683.9,311.5 L682.4,311.1 L680.9,311.5 L679.4,311.1 L677.9,311.4 L676.4,311.6 L674.9,311.1 L673.4,311.3 L671.9,311.6 L670.4,311.5 L668.9,311.4 L667.4,311.3 L665.9,311.5 L664.4,311.1 L662.9,311.3 L661.4,311.7 L659.9,311.5 L658.4,311.7 L656.9,311.3 L655.4,311.7 L653.9,311.0 L652.4,311.2 L650.9,311.5 L649.4,311.3 L647.9,311.3 L646.4,311.3 L644.9,311.1 L643.4,311.3 L641.9,311.1 L640.4,311.1 L638.9,311.6 L637.4,311.1 L635.9,311.2 L634.4,311.6 L632.9,311.6 L631.4,311.2 L629.9,311.3 L628.4,311.0 L626.9,311.2 L625.4,311.2 L623.9,311.6 L622.4,311.3 L620.9,311.7 L619.4,311.5 L617.9,311.3 L616.4,311.3 L614.9,311.6 L613.4,311.4 L611.9,311.3 L610.4,311.0 L608.9,311.3 L607.4,311.5 L605.9,311.5 L604.4,311.6 L602.9,311.2 L601.4,311.4 L599.9,311.6 L598.4,311.6 L596.9,311.6 L595.4,311.2 L593.9,311.3 L592.4,311.2 L590.9,311.6 L589.4,311.3 L587.9,311.4 L586.4,311.4 L584.9,311.2 L583.4,311.0 L581.9,311.5 L580.4,311.4 L578.9,311.3 L577.4,311.7 L575.9,311.7 L574.4,311.1 L572.9,311.3 L571.4,311.0 L569.9,311.4 L568.4,311.5 L566.9,311.6 L565.4,311.4 L563.9,311.2 L562.4,311.2 L560.9,311.6 L559.4,311.6 L557.9,311.2 L556.4,311.8 L554.9,311.2 L553.4,311.4 L551.9,311.6 L550.4,311.5 L548.9,311.5 L547.4,311.2 L545.9,311.3 L544.4,311.4 L542.9,311.3 L541.4,311.6 L539.9,311.2 L538.4,311.5 L536.9,311.2 L535.4,311.4 L533.9,311.4 L532.4,311.7 L530.9,311.3 L529.4,311.2 L527.9,311.5 L526.4,311.4 L524.9,311.2 L523.4,311.3 L521.9,311.2 L520.4,311.4 L518.9,311.2 L517.4,311.7 L515.9,311.1 L514.4,310.9 L512.9,311.4 L511.4,311.0 L509.9,311.4 L508.4,311.1 L506.9,311.6 L505.4,311.4 L503.9,311.6 L502.4,311.2 L500.9,311.0 L500.5,311.4 L500.1,311.0 L499.7,311.3 L499.3,310.8 L498.9,310.9 L498.5,311.0 L498.1,310.8 L497.7,310.8 L497.3,310.7 L496.9,310.6 L496.5,310.4 L496.1,310.5 L495.7,310.2 L495.3,309.9 L494.9,309.7 L494.5,309.7 L494.1,309.2 L493.7,308.9 L493.3,309.0 L492.9,308.6 L492.5,308.0 L492.1,307.4 L491.7,306.4 L491.3,305.5 L490.9,304.7 L490.5,303.3 L490.1,301.6 L489.7,299.7 L489.3,297.5 L488.9,295.0 L488.5,291.4 L488.1,287.5 L487.7,282.5 L487.3,276.3 L486.9,268.8 L486.5,259.2 L486.1,247.4 L485.7,232.9 L485.3,214.9 L484.9,192.0 L484.5,163.8 L484.5,164.3 L483.4,163.9 L481.9,163.7 L480.4,163.4 L478.9,163.9 L477.4,163.3 L475.9,163.9 L474.4,163.6 L472.9,164.0 L471.4,163.6 L469.9,163.8 L468.4,163.8 L466.9,163.7 L465.4,163.5 L463.9,163.6 L462.4,163.8 L460.9,164.0 L459.4,163.5 L457.9,163.4 L456.4,163.6 L454.9,163.6 L453.4,163.7 L451.9,163.5 L450.4,164.0 L448.9,163.3 L447.4,163.5 L445.9,163.8 L444.4,163.4 L442.9,163.8 L441.4,163.9 L439.9,163.7 L438.4,163.6 L436.9,163.8 L435.4,163.9 L433.9,163.5 L432.4,163.6 L430.9,163.8 L429.4,164.0 L427.9,163.9 L426.4,164.0 L424.9,163.8 L423.4,163.6 L421.9,163.8 L420.4,163.9 L418.9,163.8 L417.4,163.7 L415.9,163.7 L414.4,163.8 L412.9,163.4 L411.4,163.4 L409.9,163.8 L408.4,163.6 L406.9,163.9 L405.4,164.0 L403.9,163.5 L402.4,163.9 L400.9,163.8 L399.4,164.0 L397.9,163.7 L396.4,164.0 L394.9,164.0 L393.4,164.0 L391.9,163.8 L390.4,163.8 L388.9,163.7 L387.4,164.0 L385.9,164.0 L384.4,163.9 L382.9,164.1 L381.4,163.8 L379.9,163.6 L378.4,163.8 L376.9,163.9 L375.4,163.9 L373.9,163.4 L372.4,163.6 L370.9,163.8 L369.4,163.3 L367.9,163.9 L366.4,164.1 L364.9,163.8 L363.4,163.6 L361.9,163.9 L360.4,164.0 L358.9,164.1 L357.4,163.9 L355.9,163.6 L354.4,163.6 L352.9,163.8 L351.4,163.9 L349.9,163.9 L348.4,163.7 L346.9,163.7 L345.4,163.5 L343.9,163.6 L342.4,163.7 L340.9,163.6 L339.4,163.9 L337.9,163.8 L336.4,163.4 L334.9,163.6 L333.4,163.6 L331.9,163.7 L330.4,163.9 L328.9,163.4 L327.4,164.1 L325.9,163.6 L324.4,163.9 L322.9,163.7 L321.4,163.9 L319.9,163.9 L318.4,163.7 L316.9,163.5 L315.4,164.0 L313.9,163.9 L312.4,163.4 L310.9,163.4 L309.4,163.8 L307.9,164.0 L306.4,163.6 L304.9,163.5 L303.4,163.8 L301.9,163.6 L300.4,163.8 L298.9,163.6 L297.4,163.8 L295.9,163.7 L294.4,163.5 L292.9,163.6 L291.4,163.4 L289.9,163.8 L288.4,163.4 L286.9,163.9 L285.4,163.7 L283.9,163.8 L282.4,163.8 L280.9,164.0 L279.4,163.4 L277.9,164.0 L276.4,163.7 L274.9,164.0 L273.4,163.5 L271.9,163.3 L270.4,163.4 L268.9,163.5 L267.4,163.5 L265.9,163.5 L264.4,163.6 L262.9,163.7 L261.4,163.7 L259.9,163.8 L258.4,163.5 L256.9,163.9 L255.4,163.7 L253.9,163.5 L252.4,164.2 L252.1,163.8 L251.8,163.9 L251.5,164.1 L251.2,164.4 L250.9,164.3 L250.6,164.3 L250.3,164.5 L250.0,164.4 L249.7,164.3 L249.4,164.6 L249.1,164.5 L248.8,164.7 L248.5,164.8 L248.2,164.9 L247.9,164.8 L247.6,164.9 L247.3,165.1 L247.0,165.4 L246.7,165.3 L246.4,165.7 L246.1,165.8 L245.8,166.0 L245.5,166.1 L245.2,166.3 L244.9,166.6 L244.6,167.2 L244.3,167.3 L244.0,167.8 L243.7,168.1 L243.4,168.5 L243.1,169.0 L242.8,169.5 L242.5,170.5 L242.2,171.1 L241.9,172.3 L241.6,173.4 L241.3,175.0 L241.0,176.8 L240.7,179.6 L240.4,183.0 L240.1,187.9 L239.8,194.8 L239.5,204.4 L239.2,218.1 L238.9,238.5 L238.6,267.9 L238.3,311.3 L238.3,311.4 L237.0,311.1 L235.5,311.1 L234.0,311.4 L232.5,311.2 L231.0,311.2 L229.5,311.4 L228.0,311.1 L226.5,311.5 L225.0,311.0 L223.5,311.4 L222.0,311.2 L220.5,311.2 L219.0,311.3 L217.5,311.5 L216.0,311.3 L214.5,311.1 L213.0,311.4 L211.5,311.0 L210.0,311.1 L208.5,311.5 L207.0,311.1 L205.5,311.4 L204.0,311.2 L202.5,311.2 L201.0,311.1 L199.5,311.0 L198.0,311.4 L196.5,311.7 L195.0,311.3 L193.5,311.5 L192.0,311.3 L190.5,311.1 L189.0,311.6 L187.5,311.3 L186.0,311.7 L184.5,311.7 L183.0,311.1 L181.5,311.3 L180.0,311.1 L178.5,311.3 L177.0,311.3 L175.5,311.7 L174.0,311.3 L172.5,311.0 L171.0,311.5 L169.5,311.5 L168.0,311.5 L166.5,311.3 L165.0,311.1 L163.5,311.4 L162.0,311.6 L160.5,311.6 L159.0,311.7 L157.5,311.1 L156.0,311.4 L154.5,311.3 L153.0,311.5 L151.5,311.2 L150.0,311.3 L148.5,311.4 L147.0,311.1 L145.5,311.2 L144.0,311.2 L142.5,311.5 L141.0,311.3 L139.5,311.0 L138.0,311.3 L136.5,311.7 L135.0,311.6 L133.5,311.0 L132.0,311.6 L130.5,311.4 L129.0,311.7 L127.5,311.2 L126.0,311.3 L124.5,311.4 L123.0,311.3 L121.5,311.1 L120.0,311.3 L118.5,311.7 L117.0,310.9 L115.5,311.4 L114.0,310.9 L112.5,311.1 L111.0,311.4 L109.5,311.5 L108.0,311.3 L106.5,311.5 L105.0,311.4 L103.5,311.6 L102.0,311.6 L100.5,311.0 L99.0,311.2 L97.5,311.1 L96.0,311.6 L94.5,311.1 L93.0,311.7 L91.5,311.2 L90.0,311.4 L88.5,311.5 L87.0,311.4 L85.5,311.4 L84.0,311.4 L82.5,311.5 L81.0,311.6 L79.5,311.1 L78.0,311.5 L76.5,311.0 L75.0,311.5 L73.5,311.0 L72.0,311.5 L70.5,311.2 L69.0,311.0 L67.5,311.5 L66.0,311.4 L64.5,311.5 L63.0,311.4 L61.5,311.3 L60.0,311.5 L58.5,311.5 L57.0,311.3 L55.5,311.4 L54.0,311.1 L52.5,311.1 L51.0,311.5 L49.5,311.2 L48.0,311.3 L46.5,311.2 L45.0,311.1 L43.5,311.5 L42.0,311.5 L40.5,311.1 L39.0,311.4 L37.5,311.3 L36.0,311.4 L34.5,311.3 L33.0,311.4 L31.5,311.3 L30.0,311.5 L28.5,311.2 L27.0,311.1 L25.5,311.3 L24.0,311.5 L22.5,311.4 L21.0,311.7 L19.5,311.1 L18.0,310.9 L16.5,311.2 L15.0,311.3 L13.5,311.5 L12.0,311.7Z" fill="#86cf1e" stroke="#86cf1e" stroke-width="0.8" stroke-linejoin="round"/><path d="M12.0,308.0 L13.5,308.1 L15.0,308.3 L16.5,308.2 L18.0,308.1 L19.5,308.1 L21.0,307.8 L22.5,307.9 L24.0,308.1 L25.5,308.1 L27.0,308.2 L28.5,308.3 L30.0,308.3 L31.5,307.9 L33.0,307.8 L34.5,308.3 L36.0,308.1 L37.5,307.9 L39.0,308.2 L40.5,307.9 L42.0,307.9 L43.5,308.0 L45.0,308.1 L46.5,308.2 L48.0,307.8 L49.5,308.2 L51.0,308.1 L52.5,308.0 L54.0,308.2 L55.5,308.2 L57.0,307.8 L58.5,308.0 L60.0,308.2 L61.5,308.2 L63.0,308.1 L64.5,307.9 L66.0,308.3 L67.5,308.2 L69.0,307.9 L70.5,308.0 L72.0,308.3 L73.5,307.9 L75.0,308.0 L76.5,308.3 L78.0,308.3 L79.5,307.9 L81.0,308.2 L82.5,308.0 L84.0,308.1 L85.5,308.2 L87.0,307.8 L88.5,307.9 L90.0,307.9 L91.5,307.9 L93.0,307.8 L94.5,307.8 L96.0,308.0 L97.5,308.0 L99.0,307.8 L100.5,308.1 L102.0,308.3 L103.5,308.1 L105.0,308.0 L106.5,308.2 L108.0,308.0 L109.5,307.9 L111.0,308.0 L112.5,307.8 L114.0,308.2 L115.5,307.8 L117.0,308.0 L118.5,308.3 L120.0,308.2 L121.5,308.3 L123.0,308.1 L124.5,308.1 L126.0,308.2 L127.5,308.3 L129.0,307.9 L130.5,308.2 L132.0,307.9 L133.5,307.9 L135.0,308.2 L136.5,308.1 L138.0,308.3 L139.5,308.3 L141.0,308.1 L142.5,307.9 L144.0,307.8 L145.5,308.1 L147.0,308.2 L148.5,307.9 L150.0,307.8 L151.5,307.8 L153.0,307.9 L154.5,308.2 L156.0,307.8 L157.5,307.9 L159.0,307.9 L160.5,308.2 L162.0,308.3 L163.5,307.8 L165.0,307.8 L166.5,308.3 L168.0,308.3 L169.5,307.8 L171.0,308.0 L172.5,308.1 L174.0,307.9 L175.5,308.0 L177.0,308.0 L178.5,307.9 L180.0,307.8 L181.5,307.8 L183.0,307.8 L184.5,307.8 L186.0,308.1 L187.5,308.2 L189.0,307.9 L190.5,308.2 L192.0,308.2 L193.5,308.0 L195.0,308.0 L196.5,307.9 L198.0,308.3 L199.5,308.1 L201.0,307.8 L202.5,307.8 L204.0,308.2 L205.5,308.0 L207.0,308.2 L208.5,307.9 L210.0,308.2 L211.5,308.2 L213.0,307.8 L214.5,308.1 L216.0,307.9 L217.5,308.2 L219.0,308.2 L220.5,308.2 L222.0,307.9 L223.5,307.8 L225.0,308.1 L226.5,308.1 L228.0,307.8 L229.5,307.9 L231.0,308.1 L232.5,307.8 L234.0,308.1 L235.5,307.9 L237.0,307.9 L238.3,308.1 L238.3,308.1 L238.6,250.3 L238.9,211.0 L239.2,184.1 L239.5,165.7 L239.8,152.8 L240.1,143.7 L240.4,137.2 L240.7,132.5 L241.0,129.0 L241.3,126.4 L241.6,124.3 L241.9,122.7 L242.2,121.4 L242.5,120.3 L242.8,119.4 L243.1,118.6 L243.4,117.9 L243.7,117.3 L244.0,116.7 L244.3,116.2 L244.6,115.8 L244.9,115.4 L245.2,115.1 L245.5,114.7 L245.8,114.4 L246.1,114.2 L246.4,113.9 L246.7,113.7 L247.0,113.5 L247.3,113.3 L247.6,113.2 L247.9,113.0 L248.2,112.9 L248.5,112.7 L248.8,112.6 L249.1,112.5 L249.4,112.4 L249.7,112.3 L250.0,112.3 L250.3,112.1 L250.6,112.1 L250.9,112.2 L251.2,111.7 L251.5,112.1 L251.8,111.7 L252.1,111.7 L252.4,111.9 L253.9,111.8 L255.4,111.6 L256.9,111.7 L258.4,111.3 L259.9,111.3 L261.4,111.5 L262.9,111.3 L264.4,111.2 L265.9,111.2 L267.4,111.6 L268.9,111.6 L270.4,111.5 L271.9,111.7 L273.4,111.6 L274.9,111.3 L276.4,111.3 L277.9,111.5 L279.4,111.1 L280.9,111.5 L282.4,111.2 L283.9,111.1 L285.4,111.4 L286.9,111.2 L288.4,111.7 L289.9,111.6 L291.4,111.4 L292.9,111.2 L294.4,111.2 L295.9,111.4 L297.4,111.4 L298.9,111.3 L300.4,111.5 L301.9,111.4 L303.4,111.6 L304.9,111.2 L306.4,111.1 L307.9,111.3 L309.4,111.4 L310.9,111.3 L312.4,111.5 L313.9,111.2 L315.4,111.3 L316.9,111.4 L318.4,111.5 L319.9,111.6 L321.4,111.3 L322.9,111.4 L324.4,111.7 L325.9,111.7 L327.4,111.5 L328.9,111.2 L330.4,111.4 L331.9,111.5 L333.4,111.3 L334.9,111.1 L336.4,111.7 L337.9,111.6 L339.4,111.2 L340.9,111.4 L342.4,111.5 L343.9,111.3 L345.4,111.1 L346.9,111.6 L348.4,111.6 L349.9,111.4 L351.4,111.2 L352.9,111.3 L354.4,111.2 L355.9,111.7 L357.4,111.1 L358.9,111.3 L360.4,111.6 L361.9,111.2 L363.4,111.2 L364.9,111.1 L366.4,111.2 L367.9,111.4 L369.4,111.6 L370.9,111.2 L372.4,111.2 L373.9,111.6 L375.4,111.4 L376.9,111.3 L378.4,111.2 L379.9,111.2 L381.4,111.7 L382.9,111.2 L384.4,111.3 L385.9,111.5 L387.4,111.6 L388.9,111.6 L390.4,111.4 L391.9,111.7 L393.4,111.5 L394.9,111.3 L396.4,111.4 L397.9,111.5 L399.4,111.5 L400.9,111.2 L402.4,111.2 L403.9,111.7 L405.4,111.2 L406.9,111.6 L408.4,111.3 L409.9,111.2 L411.4,111.3 L412.9,111.4 L414.4,111.7 L415.9,111.2 L417.4,111.6 L418.9,111.3 L420.4,111.2 L421.9,111.5 L423.4,111.3 L424.9,111.2 L426.4,111.4 L427.9,111.6 L429.4,111.6 L430.9,111.4 L432.4,111.1 L433.9,111.6 L435.4,111.5 L436.9,111.6 L438.4,111.7 L439.9,111.3 L441.4,111.6 L442.9,111.6 L444.4,111.3 L445.9,111.3 L447.4,111.3 L448.9,111.3 L450.4,111.3 L451.9,111.2 L453.4,111.2 L454.9,111.6 L456.4,111.3 L457.9,111.5 L459.4,111.6 L460.9,111.6 L462.4,111.2 L463.9,111.7 L465.4,111.6 L466.9,111.7 L468.4,111.5 L469.9,111.6 L471.4,111.6 L472.9,111.3 L474.4,111.5 L475.9,111.3 L477.4,111.6 L478.9,111.2 L480.4,111.4 L481.9,111.3 L483.4,111.6 L484.5,111.9 L484.5,111.4 L484.9,149.2 L485.3,179.4 L485.7,203.6 L486.1,222.9 L486.5,238.4 L486.9,250.9 L487.3,261.0 L487.7,269.2 L488.1,275.9 L488.5,281.3 L488.9,285.8 L489.3,289.4 L489.7,292.4 L490.1,294.9 L490.5,297.0 L490.9,298.7 L491.3,300.1 L491.7,301.3 L492.1,302.3 L492.5,303.2 L492.9,303.9 L493.3,304.5 L493.7,304.9 L494.1,305.3 L494.5,305.7 L494.9,306.0 L495.3,306.3 L495.7,306.5 L496.1,306.7 L496.5,306.9 L496.9,307.0 L497.3,307.2 L497.7,307.3 L498.1,307.4 L498.5,307.5 L498.9,307.5 L499.3,307.8 L499.7,307.9 L500.1,307.9 L500.5,307.5 L500.9,308.1 L502.4,308.0 L503.9,308.1 L505.4,308.1 L506.9,307.7 L508.4,308.3 L509.9,308.1 L511.4,308.0 L512.9,307.9 L514.4,308.2 L515.9,308.2 L517.4,308.3 L518.9,307.9 L520.4,308.0 L521.9,307.9 L523.4,307.8 L524.9,307.9 L526.4,307.8 L527.9,308.2 L529.4,307.9 L530.9,307.8 L532.4,307.8 L533.9,308.2 L535.4,307.9 L536.9,308.0 L538.4,308.0 L539.9,308.2 L541.4,308.3 L542.9,307.9 L544.4,308.1 L545.9,308.3 L547.4,308.0 L548.9,308.3 L550.4,308.2 L551.9,307.9 L553.4,308.3 L554.9,308.1 L556.4,307.8 L557.9,308.1 L559.4,308.2 L560.9,308.1 L562.4,308.0 L563.9,308.0 L565.4,308.3 L566.9,308.1 L568.4,307.9 L569.9,308.0 L571.4,308.0 L572.9,308.3 L574.4,308.2 L575.9,307.8 L577.4,308.3 L578.9,307.8 L580.4,308.1 L581.9,308.0 L583.4,308.2 L584.9,308.0 L586.4,307.8 L587.9,308.1 L589.4,308.2 L590.9,308.2 L592.4,308.0 L593.9,307.9 L595.4,308.2 L596.9,308.2 L598.4,307.9 L599.9,308.3 L601.4,308.3 L602.9,308.0 L604.4,308.0 L605.9,308.2 L607.4,308.3 L608.9,307.9 L610.4,307.9 L611.9,307.9 L613.4,308.2 L614.9,307.9 L616.4,308.1 L617.9,308.1 L619.4,308.2 L620.9,307.8 L622.4,308.3 L623.9,308.3 L625.4,308.1 L626.9,308.2 L628.4,307.9 L629.9,308.3 L631.4,308.1 L632.9,308.2 L634.4,308.3 L635.9,308.0 L637.4,308.3 L638.9,307.9 L640.4,307.8 L641.9,308.1 L643.4,308.3 L644.9,308.3 L646.4,308.3 L647.9,308.1 L649.4,308.3 L650.9,308.1 L652.4,307.8 L653.9,308.1 L655.4,308.2 L656.9,308.0 L658.4,308.1 L659.9,307.9 L661.4,307.9 L662.9,308.0 L664.4,308.1 L665.9,308.0 L667.4,307.8 L668.9,307.8 L670.4,308.0 L671.9,308.2 L673.4,308.2 L674.9,307.9 L676.4,307.9 L677.9,308.1 L679.4,307.9 L680.9,308.1 L682.4,308.3 L683.9,307.9 L685.4,308.1 L686.9,308.2 L688.4,308.2 L689.9,308.2 L691.4,308.2 L692.9,307.9 L694.4,308.3 L695.9,308.3 L697.4,307.8 L698.9,308.3 L700.4,308.0 L701.9,307.8 L703.4,307.8 L704.9,308.2 L706.4,308.2 L707.9,307.8 L709.4,308.0 L710.9,308.1 L712.4,308.3 L713.9,308.0 L715.4,308.2 L716.9,307.9 L718.4,307.9 L719.9,307.8 L721.4,308.0 L722.9,308.1 L724.4,307.9 L725.9,307.8 L727.4,307.9 L728.9,307.8 L730.4,307.9 L731.9,307.9 L733.4,308.1 L734.9,307.9 L736.4,308.0 L737.9,308.0 L739.4,308.3 L740.9,308.0 L742.4,308.3 L743.9,308.0 L745.4,307.9 L746.9,308.1 L748.4,307.8 L749.9,307.9 L751.4,307.8 L752.9,308.2 L754.4,308.3 L755.9,308.0 L757.4,308.0 L757.4,311.7 L755.9,311.7 L754.4,312.2 L752.9,311.9 L751.4,311.5 L749.9,311.8 L748.4,311.7 L746.9,311.8 L745.4,311.8 L743.9,311.9 L742.4,312.1 L740.9,311.9 L739.4,312.3 L737.9,311.8 L736.4,311.8 L734.9,311.6 L733.4,311.9 L731.9,311.8 L730.4,311.7 L728.9,311.7 L727.4,311.6 L725.9,311.6 L724.4,311.8 L722.9,312.0 L721.4,311.8 L719.9,311.7 L718.4,311.6 L716.9,311.8 L715.4,312.0 L713.9,311.7 L712.4,312.1 L710.9,311.8 L709.4,311.9 L707.9,311.7 L706.4,311.8 L704.9,312.0 L703.4,311.6 L701.9,311.6 L700.4,311.8 L698.9,312.2 L697.4,311.5 L695.9,312.1 L694.4,312.2 L692.9,311.8 L691.4,312.0 L689.9,311.9 L688.4,312.0 L686.9,312.0 L685.4,312.0 L683.9,311.6 L682.4,312.1 L680.9,311.9 L679.4,311.6 L677.9,312.0 L676.4,311.7 L674.9,311.6 L673.4,311.9 L671.9,312.1 L670.4,311.7 L668.9,311.6 L667.4,311.5 L665.9,311.7 L664.4,311.7 L662.9,311.9 L661.4,311.6 L659.9,311.6 L658.4,311.8 L656.9,311.7 L655.4,312.1 L653.9,312.0 L652.4,311.8 L650.9,312.0 L649.4,312.1 L647.9,312.0 L646.4,312.0 L644.9,312.2 L643.4,312.1 L641.9,311.8 L640.4,311.6 L638.9,311.8 L637.4,312.1 L635.9,311.6 L634.4,312.2 L632.9,312.1 L631.4,311.9 L629.9,312.2 L628.4,311.5 L626.9,311.9 L625.4,311.8 L623.9,312.0 L622.4,312.2 L620.9,311.7 L619.4,311.8 L617.9,311.7 L616.4,311.8 L614.9,311.7 L613.4,312.0 L611.9,311.9 L610.4,311.7 L608.9,311.8 L607.4,312.1 L605.9,311.9 L604.4,311.7 L602.9,311.7 L601.4,312.3 L599.9,312.2 L598.4,311.7 L596.9,311.9 L595.4,311.9 L593.9,311.6 L592.4,311.7 L590.9,312.1 L589.4,311.9 L587.9,311.9 L586.4,311.7 L584.9,311.7 L583.4,312.0 L581.9,311.9 L580.4,311.9 L578.9,311.6 L577.4,312.2 L575.9,311.7 L574.4,311.9 L572.9,312.1 L571.4,311.9 L569.9,311.9 L568.4,311.8 L566.9,312.0 L565.4,312.0 L563.9,311.7 L562.4,311.8 L560.9,311.9 L559.4,311.9 L557.9,312.0 L556.4,311.7 L554.9,311.9 L553.4,311.9 L551.9,311.8 L550.4,312.0 L548.9,312.1 L547.4,311.9 L545.9,312.2 L544.4,311.9 L542.9,311.9 L541.4,312.3 L539.9,312.2 L538.4,311.8 L536.9,311.8 L535.4,311.6 L533.9,311.9 L532.4,311.7 L530.9,311.7 L529.4,311.8 L527.9,312.1 L526.4,311.7 L524.9,311.8 L523.4,311.6 L521.9,311.8 L520.4,311.7 L518.9,311.7 L517.4,312.0 L515.9,312.1 L514.4,312.0 L512.9,311.7 L511.4,311.9 L509.9,311.7 L508.4,312.2 L506.9,311.6 L505.4,311.8 L503.9,311.9 L502.4,311.9 L500.9,312.0 L500.5,311.4 L500.1,311.7 L499.7,311.8 L499.3,311.5 L498.9,311.3 L498.5,311.2 L498.1,311.1 L497.7,311.0 L497.3,311.1 L496.9,310.8 L496.5,310.8 L496.1,310.4 L495.7,310.4 L495.3,310.1 L494.9,309.7 L494.5,309.5 L494.1,309.2 L493.7,308.6 L493.3,308.0 L492.9,307.3 L492.5,306.6 L492.1,305.9 L491.7,304.9 L491.3,303.8 L490.9,302.2 L490.5,300.5 L490.1,298.5 L489.7,296.0 L489.3,292.9 L488.9,289.4 L488.5,284.8 L488.1,279.5 L487.7,272.7 L487.3,264.4 L486.9,254.5 L486.5,241.8 L486.1,226.4 L485.7,206.9 L485.3,183.1 L484.9,152.8 L484.5,115.0 L484.5,115.3 L483.4,115.1 L481.9,114.8 L480.4,114.8 L478.9,114.8 L477.4,115.0 L475.9,114.8 L474.4,114.9 L472.9,114.9 L471.4,115.2 L469.9,114.9 L468.4,115.0 L466.9,115.2 L465.4,115.1 L463.9,115.2 L462.4,114.7 L460.9,115.2 L459.4,115.0 L457.9,114.9 L456.4,114.9 L454.9,115.0 L453.4,114.6 L451.9,114.7 L450.4,114.8 L448.9,114.7 L447.4,115.0 L445.9,114.8 L444.4,114.8 L442.9,115.0 L441.4,115.2 L439.9,114.7 L438.4,115.3 L436.9,115.2 L435.4,115.1 L433.9,115.1 L432.4,114.6 L430.9,115.0 L429.4,115.2 L427.9,115.1 L426.4,114.7 L424.9,114.8 L423.4,114.9 L421.9,115.1 L420.4,114.8 L418.9,114.7 L417.4,115.1 L415.9,114.8 L414.4,115.3 L412.9,115.0 L411.4,114.7 L409.9,114.8 L408.4,114.8 L406.9,115.1 L405.4,114.6 L403.9,115.1 L402.4,114.7 L400.9,114.7 L399.4,115.0 L397.9,115.0 L396.4,114.9 L394.9,114.9 L393.4,115.0 L391.9,115.1 L390.4,115.0 L388.9,115.1 L387.4,115.3 L385.9,115.2 L384.4,114.6 L382.9,114.7 L381.4,115.3 L379.9,114.7 L378.4,114.7 L376.9,114.7 L375.4,114.7 L373.9,115.0 L372.4,114.6 L370.9,114.6 L369.4,115.1 L367.9,114.9 L366.4,114.8 L364.9,114.7 L363.4,114.6 L361.9,114.8 L360.4,115.1 L358.9,114.8 L357.4,114.7 L355.9,115.2 L354.4,114.6 L352.9,114.9 L351.4,114.6 L349.9,115.0 L348.4,115.0 L346.9,115.2 L345.4,114.5 L343.9,114.6 L342.4,115.0 L340.9,114.8 L339.4,114.7 L337.9,115.0 L336.4,115.3 L334.9,114.7 L333.4,114.8 L331.9,115.1 L330.4,115.0 L328.9,114.7 L327.4,115.0 L325.9,115.0 L324.4,115.0 L322.9,114.8 L321.4,115.0 L319.9,115.0 L318.4,115.0 L316.9,114.7 L315.4,114.8 L313.9,114.9 L312.4,115.0 L310.9,114.8 L309.4,114.7 L307.9,114.7 L306.4,114.5 L304.9,114.8 L303.4,114.9 L301.9,115.0 L300.4,115.0 L298.9,114.9 L297.4,114.9 L295.9,114.9 L294.4,114.8 L292.9,114.7 L291.4,114.9 L289.9,115.0 L288.4,115.3 L286.9,114.8 L285.4,114.8 L283.9,114.7 L282.4,114.6 L280.9,114.9 L279.4,114.6 L277.9,115.1 L276.4,114.9 L274.9,114.9 L273.4,115.2 L271.9,115.2 L270.4,115.1 L268.9,115.0 L267.4,115.1 L265.9,114.8 L264.4,114.7 L262.9,114.9 L261.4,115.0 L259.9,114.7 L258.4,114.7 L256.9,115.1 L255.4,115.2 L253.9,115.4 L252.4,115.3 L252.1,115.2 L251.8,115.2 L251.5,115.6 L251.2,115.2 L250.9,115.7 L250.6,115.5 L250.3,115.5 L250.0,115.7 L249.7,115.8 L249.4,116.0 L249.1,115.9 L248.8,116.2 L248.5,116.2 L248.2,116.2 L247.9,116.5 L247.6,116.6 L247.3,116.8 L247.0,117.1 L246.7,117.1 L246.4,117.5 L246.1,117.8 L245.8,117.9 L245.5,118.2 L245.2,118.7 L244.9,119.0 L244.6,119.2 L244.3,119.6 L244.0,120.1 L243.7,120.7 L243.4,121.3 L243.1,122.1 L242.8,122.8 L242.5,123.7 L242.2,124.9 L241.9,126.3 L241.6,127.7 L241.3,129.8 L241.0,132.4 L240.7,135.9 L240.4,140.8 L240.1,147.2 L239.8,156.3 L239.5,169.1 L239.2,187.8 L238.9,214.7 L238.6,254.2 L238.3,311.9 L238.3,311.7 L237.0,311.7 L235.5,311.6 L234.0,311.9 L232.5,311.6 L231.0,311.8 L229.5,311.7 L228.0,311.7 L226.5,311.9 L225.0,311.8 L223.5,311.7 L222.0,311.7 L220.5,312.1 L219.0,311.9 L217.5,312.1 L216.0,311.5 L214.5,311.8 L213.0,311.6 L211.5,311.9 L210.0,311.9 L208.5,311.7 L207.0,312.1 L205.5,311.7 L204.0,311.9 L202.5,311.7 L201.0,311.5 L199.5,311.9 L198.0,312.2 L196.5,311.6 L195.0,311.7 L193.5,311.6 L192.0,312.0 L190.5,312.2 L189.0,311.8 L187.5,311.8 L186.0,311.9 L184.5,311.6 L183.0,311.6 L181.5,311.7 L180.0,311.6 L178.5,311.8 L177.0,311.8 L175.5,311.9 L174.0,311.8 L172.5,311.9 L171.0,311.6 L169.5,311.6 L168.0,312.0 L166.5,312.2 L165.0,311.7 L163.5,311.6 L162.0,312.3 L160.5,311.8 L159.0,311.8 L157.5,311.8 L156.0,311.4 L154.5,311.9 L153.0,311.5 L151.5,311.6 L150.0,311.7 L148.5,311.7 L147.0,312.0 L145.5,311.8 L144.0,311.6 L142.5,311.6 L141.0,312.0 L139.5,312.1 L138.0,311.9 L136.5,311.8 L135.0,312.1 L133.5,311.8 L132.0,311.8 L130.5,311.9 L129.0,311.8 L127.5,312.2 L126.0,311.9 L124.5,311.9 L123.0,312.0 L121.5,311.9 L120.0,311.9 L118.5,312.1 L117.0,311.9 L115.5,311.8 L114.0,311.9 L112.5,311.7 L111.0,311.9 L109.5,311.8 L108.0,311.8 L106.5,312.1 L105.0,311.8 L103.5,312.0 L102.0,312.1 L100.5,311.8 L99.0,311.6 L97.5,311.8 L96.0,311.7 L94.5,311.6 L93.0,311.6 L91.5,311.7 L90.0,311.6 L88.5,311.6 L87.0,311.6 L85.5,312.0 L84.0,311.9 L82.5,311.8 L81.0,311.9 L79.5,311.7 L78.0,312.0 L76.5,312.2 L75.0,311.9 L73.5,311.8 L72.0,312.1 L70.5,311.7 L69.0,311.8 L67.5,312.0 L66.0,312.1 L64.5,311.6 L63.0,311.9 L61.5,312.0 L60.0,312.1 L58.5,311.8 L57.0,311.6 L55.5,311.9 L54.0,311.9 L52.5,311.8 L51.0,311.9 L49.5,312.0 L48.0,311.7 L46.5,312.0 L45.0,311.8 L43.5,311.7 L42.0,311.8 L40.5,311.7 L39.0,312.0 L37.5,311.7 L36.0,312.0 L34.5,312.0 L33.0,311.5 L31.5,311.6 L30.0,312.0 L28.5,312.2 L27.0,312.0 L25.5,312.0 L24.0,312.1 L22.5,311.8 L21.0,311.5 L19.5,311.8 L18.0,311.8 L16.5,312.1 L15.0,312.1 L13.5,311.9 L12.0,311.8Z" fill="#f7901e" stroke="#f7901e" stroke-width="0.8" stroke-linejoin="round"/></g><polygon points="233.10000000000002,40.5 241.5,40.5 237.3,44.3" fill="#f7901e"/><rect x="232.9" y="45" width="8.8" height="8.4" fill="#000" stroke="#f7901e" stroke-width="1.2"/><polygon points="234.9,53.8 239.7,53.8 237.3,56.8" fill="#f7901e"/><path d="M263,29.5 h-2.5 v8 h2.5 M260.5,33.5 H508.5 M506,29.5 h2.5 v8 h-2.5" fill="none" stroke="#b8b8b8" stroke-width="1"/><polygon points="331.5,26 338.5,26 335,28.6" fill="#f7901e"/><rect x="332.6" y="32.2" width="4.8" height="6" fill="#3a3a3a" stroke="#f7901e" stroke-width="0.9"/><polygon points="733,43.5 753.2,43.5 753.2,63.5" fill="#585858"/><circle cx="748.6" cy="47.6" r="2.2" fill="none" stroke="#c4c4c4" stroke-width="1"/><line x1="746.9" y1="49.3" x2="743.2" y2="52.8" stroke="#c4c4c4" stroke-width="1.2"/><polygon points="13.5,302.5 29,302.5 34,310 29,317.5 13.5,317.5" fill="#f7901e"/><rect x="760.8" y="222.7" width="1.6" height="1.6" fill="#9a9a9a"/><rect x="760.8" y="226.5" width="1.6" height="1.6" fill="#9a9a9a"/><rect x="760.8" y="230.29999999999998" width="1.6" height="1.6" fill="#9a9a9a"/></svg>
<span class="t" style="left:87.30px;width:300px;text-align:center;top:46.30px;font-size:6.2px;line-height:8.2px;color:#f7901e;font-weight:700;">T</span>
<span class="t" style="left:185.00px;width:300px;text-align:center;top:32.00px;font-size:5px;line-height:7px;color:#f7901e;font-weight:700;">T</span>
<span class="t" style="left:18.18px;top:306.00px;font-size:7px;line-height:9px;color:#4a2a08;font-weight:400;letter-spacing:0.12px;">R 5</span>
<span class="t" style="left:321.70px;top:96.40px;font-size:10px;line-height:12px;color:#f7901e;font-weight:400;transform:scaleX(1.115);transform-origin:left center;-webkit-text-stroke:0.25px;">KI_10A on 1 ohm</span>
<span class="t" style="left:320.90px;top:147.30px;font-size:10px;line-height:12px;color:#86cf1e;font-weight:400;transform:scaleX(1.107);transform-origin:left center;-webkit-text-stroke:0.25px;">KI_7.5A on 1 ohm</span>
<span class="t" style="left:323.00px;top:197.10px;font-size:10px;line-height:12px;color:#ee2d57;font-weight:400;transform:scaleX(1.111);transform-origin:left center;-webkit-text-stroke:0.25px;">KI_5A on 1 ohm</span>
<span class="t" style="left:323.00px;top:246.60px;font-size:10px;line-height:12px;color:#1fc4d6;font-weight:400;letter-spacing:0.53px;-webkit-text-stroke:0.25px;">KI_2.5A on 1 ohm</span>
<span class="t" style="left:322.20px;top:275.70px;font-size:10px;line-height:12px;color:#f7ee1e;font-weight:400;transform:scaleX(1.108);transform-origin:left center;-webkit-text-stroke:0.25px;">KI_1A on 1 ohm</span>
<span class="t" style="left:454.26px;width:300px;text-align:right;top:73.30px;font-size:7.6px;line-height:9.6px;color:#cf7f2a;font-weight:700;">12 A</span>
<span class="t" style="left:454.26px;width:300px;text-align:right;top:112.10px;font-size:7.6px;line-height:9.6px;color:#cf7f2a;font-weight:700;">10 A</span>
<span class="t" style="left:454.26px;width:300px;text-align:right;top:150.90px;font-size:7.6px;line-height:9.6px;color:#cf7f2a;font-weight:700;">8 A</span>
<span class="t" style="left:454.26px;width:300px;text-align:right;top:189.70px;font-size:7.6px;line-height:9.6px;color:#cf7f2a;font-weight:700;">6 A</span>
<span class="t" style="left:454.26px;width:300px;text-align:right;top:228.50px;font-size:7.6px;line-height:9.6px;color:#cf7f2a;font-weight:700;">4 A</span>
<span class="t" style="left:454.26px;width:300px;text-align:right;top:267.30px;font-size:7.6px;line-height:9.6px;color:#cf7f2a;font-weight:700;">2 A</span>
<span class="t" style="left:454.26px;width:300px;text-align:right;top:306.10px;font-size:7.6px;line-height:9.6px;color:#cf7f2a;font-weight:700;">0 A</span>
<span class="t" style="left:454.26px;width:300px;text-align:right;top:344.90px;font-size:7.6px;line-height:9.6px;color:#cf7f2a;font-weight:700;">-2 A</span>
<span class="t" style="left:454.26px;width:300px;text-align:right;top:383.70px;font-size:7.6px;line-height:9.6px;color:#cf7f2a;font-weight:700;">-4 A</span>
<span class="t" style="left:-61.30px;width:300px;text-align:center;top:419.15px;font-size:7.5px;line-height:9.5px;color:#a0a0a0;font-weight:400;">-60 µs</span>
<span class="t" style="left:13.00px;width:300px;text-align:center;top:419.15px;font-size:7.5px;line-height:9.5px;color:#a0a0a0;font-weight:400;">-30 µs</span>
<span class="t" style="left:87.30px;width:300px;text-align:center;top:419.15px;font-size:7.5px;line-height:9.5px;color:#a0a0a0;font-weight:400;">0 s</span>
<span class="t" style="left:161.60px;width:300px;text-align:center;top:419.15px;font-size:7.5px;line-height:9.5px;color:#a0a0a0;font-weight:400;">30 µs</span>
<span class="t" style="left:235.90px;width:300px;text-align:center;top:419.15px;font-size:7.5px;line-height:9.5px;color:#a0a0a0;font-weight:400;">60 µs</span>
<span class="t" style="left:310.20px;width:300px;text-align:center;top:419.15px;font-size:7.5px;line-height:9.5px;color:#a0a0a0;font-weight:400;">90 µs</span>
<span class="t" style="left:384.50px;width:300px;text-align:center;top:419.15px;font-size:7.5px;line-height:9.5px;color:#a0a0a0;font-weight:400;">120 µs</span>
<span class="t" style="left:458.80px;width:300px;text-align:center;top:419.15px;font-size:7.5px;line-height:9.5px;color:#a0a0a0;font-weight:400;">150 µs</span>
<span class="t" style="left:533.10px;width:300px;text-align:center;top:419.15px;font-size:7.5px;line-height:9.5px;color:#a0a0a0;font-weight:400;">180 µs</span>
<span class="t" style="left:21.92px;top:9.45px;font-size:9.7px;line-height:11.7px;color:#dcdcdc;font-weight:400;letter-spacing:-0.06px;">File</span>
<span class="t" style="left:60.02px;top:9.45px;font-size:9.7px;line-height:11.7px;color:#dcdcdc;font-weight:400;letter-spacing:0.42px;">Edit</span>
<span class="t" style="left:99.92px;top:9.45px;font-size:9.7px;line-height:11.7px;color:#dcdcdc;font-weight:400;transform:scaleX(1.158);transform-origin:left center;">Utility</span>
<span class="t" style="left:149.42px;top:9.45px;font-size:9.7px;line-height:11.7px;color:#dcdcdc;font-weight:400;letter-spacing:0.34px;">Help</span>
<span class="t" style="left:19.02px;top:27.95px;font-size:9.7px;line-height:11.7px;color:#e0e0e0;font-weight:400;letter-spacing:0.48px;">Waveform View</span>
<span class="t" style="left:793.56px;top:7.35px;font-size:12.3px;line-height:14.3px;color:#ffffff;font-weight:700;transform:scaleX(0.948);transform-origin:left center;">Tektronix</span>
<svg style="position:absolute;left:805px;top:8px" width="10" height="12"><path d="M2.9,10.3 L6.9,3.9" stroke="#1fb6d9" stroke-width="1.5" fill="none"/></svg>
<div style="left:764px;top:24.3px;width:88px;height:406.2px;background:#2e2e2e;border-left:1px solid #454545;border-top:1px solid #454545;border-bottom:1px solid #404040;box-sizing:border-box;"></div>
<span class="t" style="left:658.70px;width:300px;text-align:center;top:24.60px;font-size:9px;line-height:11px;color:#e8e8e8;font-weight:700;letter-spacing:-0.01px;">Add New...</span>
<div class="rb" style="left:768.6px;top:38px;width:38.2px;height:22px;"></div>
<span class="t" style="left:637.70px;width:300px;text-align:center;top:42.90px;font-size:9.4px;line-height:11.4px;color:#e6e6e6;font-weight:400;transform:scaleX(0.931);transform-origin:center center;-webkit-text-stroke:0.2px;">Cursors</span>
<div class="rb" style="left:811px;top:38px;width:38.2px;height:22px;"></div>
<span class="t" style="left:679.67px;width:300px;text-align:center;top:42.90px;font-size:9.4px;line-height:11.4px;color:#e6e6e6;font-weight:400;letter-spacing:0.14px;-webkit-text-stroke:0.2px;">Callout</span>
<div class="rb" style="left:768.6px;top:65.2px;width:38.2px;height:22px;"></div>
<span class="t" style="left:637.46px;width:300px;text-align:center;top:70.10px;font-size:9.4px;line-height:11.4px;color:#e6e6e6;font-weight:400;letter-spacing:-0.07px;-webkit-text-stroke:0.2px;">Measure</span>
<div class="rb" style="left:811px;top:65.2px;width:38.2px;height:22px;"></div>
<span class="t" style="left:679.60px;width:300px;text-align:center;top:70.10px;font-size:9.4px;line-height:11.4px;color:#e6e6e6;font-weight:400;transform:scaleX(0.935);transform-origin:center center;-webkit-text-stroke:0.2px;">Search</span>
<div class="rb" style="left:768.6px;top:92.3px;width:38.2px;height:22px;"></div>
<span class="t" style="left:637.70px;width:300px;text-align:center;top:93.00px;font-size:9.4px;line-height:11.4px;color:#e6e6e6;font-weight:400;transform:scaleX(0.933);transform-origin:center center;-webkit-text-stroke:0.2px;">Results</span>
<span class="t" style="left:637.67px;width:300px;text-align:center;top:101.60px;font-size:9.4px;line-height:11.4px;color:#e6e6e6;font-weight:400;letter-spacing:-0.06px;-webkit-text-stroke:0.2px;">Table</span>
<div class="rb" style="left:811px;top:92.3px;width:38.2px;height:22px;"></div>
<span class="t" style="left:680.04px;width:300px;text-align:center;top:97.20px;font-size:9.4px;line-height:11.4px;color:#e6e6e6;font-weight:400;letter-spacing:0.48px;-webkit-text-stroke:0.2px;">Plot</span>
<div class="rb" style="left:768.6px;top:121.6px;width:38.2px;height:22px;"></div>
<div class="rb" style="left:811px;top:121.6px;width:38.2px;height:22px;"></div>
<span class="t" style="left:679.81px;width:300px;text-align:center;top:126.50px;font-size:9.4px;line-height:11.4px;color:#e6e6e6;font-weight:400;letter-spacing:0.21px;-webkit-text-stroke:0.2px;">More...</span>
<div style="left:766px;top:118.3px;width:85px;height:1px;background:#484848;"></div>
<div style="left:766px;top:147.8px;width:85px;height:1px;background:#484848;"></div>
<svg style="position:absolute;left:780px;top:125px" width="16" height="15" viewBox="780 125 16 15"><rect x="782.6" y="128.2" width="10.2" height="8.2" fill="none" stroke="#8a8a8a" stroke-width="1.1" stroke-dasharray="1.1 1.2"/><path d="M784.8,134.6 L788,130.2 L789.6,132 L792.2,130" fill="none" stroke="#a0a0a0" stroke-width="1.2"/><path d="M790.6,134.2 L794.2,135.6 L792.9,136.3 L794.4,138 L793.6,138.6 L792.2,136.9 L791.4,137.9 Z" fill="#c4c4c4"/></svg>
<div style="left:13.8px;top:434.3px;width:14.8px;height:42.5px;background:linear-gradient(#424242,#343434);border-radius:2.5px;"></div>
<div style="left:91px;top:434.3px;width:14px;height:42.5px;background:#2d2d2d;border:1px solid #3c3c3c;border-radius:2px;box-sizing:border-box;"></div>
<svg style="position:absolute;left:0;top:0" width="862" height="489"><path d="M23.3,453.3 L19.7,456.8 L23.3,460.3" fill="none" stroke="#dedede" stroke-width="2"/><path d="M96.4,453.3 L100,456.8 L96.4,460.3" fill="none" stroke="#dedede" stroke-width="2"/></svg>
<div style="left:32.7px;top:433.5px;width:53px;height:46.5px;background:#c9c9c9;border-radius:3px 3px 0 0;overflow:hidden;"><div style="left:0;top:0;width:100%;height:11.3px;background:#f7941f"></div></div>
<span class="t" style="left:35.57px;top:433.30px;font-size:8.8px;line-height:10.8px;color:#4a300c;font-weight:700;letter-spacing:-0.02px;">Ref 5</span>
<span class="t" style="left:36.38px;top:447.10px;font-size:8.6px;line-height:10.6px;color:#1c1c1c;font-weight:400;letter-spacing:0.47px;-webkit-text-stroke:0.2px;">2 A/div</span>
<span class="t" style="left:36.38px;top:457.20px;font-size:8.6px;line-height:10.6px;color:#1c1c1c;font-weight:400;letter-spacing:-0.12px;-webkit-text-stroke:0.2px;">3.125 GS/s</span>
<span class="t" style="left:36.38px;top:467.70px;font-size:8.6px;line-height:10.6px;color:#1c1c1c;font-weight:400;letter-spacing:0.05px;-webkit-text-stroke:0.2px;">KI_1R_10...</span>
<div class="cb" style="left:108.5px;top:433.3px;width:23.4px;height:46px;"></div>
<div style="left:111.1px;top:437.2px;width:18.8px;height:2.1px;background:#cccc34;border-radius:1px;"></div>
<span class="t" style="left:-29.70px;width:300px;text-align:center;top:452.00px;font-size:11px;line-height:13px;color:#d2d2d2;font-weight:700;">1</span>
<div class="cb" style="left:135.1px;top:433.3px;width:23.4px;height:46px;"></div>
<div style="left:137.7px;top:437.2px;width:18.8px;height:2.1px;background:#26b0c4;border-radius:1px;"></div>
<span class="t" style="left:-3.10px;width:300px;text-align:center;top:452.00px;font-size:11px;line-height:13px;color:#d2d2d2;font-weight:700;">2</span>
<div class="cb" style="left:161.7px;top:433.3px;width:23.4px;height:46px;"></div>
<div style="left:164.29999999999998px;top:437.2px;width:18.8px;height:2.1px;background:#cc3456;border-radius:1px;"></div>
<span class="t" style="left:23.50px;width:300px;text-align:center;top:452.00px;font-size:11px;line-height:13px;color:#d2d2d2;font-weight:700;">3</span>
<div class="cb" style="left:188.3px;top:433.3px;width:23.4px;height:46px;"></div>
<div style="left:190.9px;top:437.2px;width:18.8px;height:2.1px;background:#78b020;border-radius:1px;"></div>
<span class="t" style="left:50.10px;width:300px;text-align:center;top:452.00px;font-size:11px;line-height:13px;color:#d2d2d2;font-weight:700;">4</span>
<div class="cb" style="left:214.9px;top:433.3px;width:23.4px;height:46px;"></div>
<div style="left:217.5px;top:437.2px;width:18.8px;height:2.1px;background:#e08420;border-radius:1px;"></div>
<span class="t" style="left:76.70px;width:300px;text-align:center;top:452.00px;font-size:11px;line-height:13px;color:#d2d2d2;font-weight:700;">5</span>
<div class="cb" style="left:241.5px;top:433.3px;width:23.4px;height:46px;"></div>
<div style="left:244.1px;top:437.2px;width:18.8px;height:2.1px;background:#2626a8;border-radius:1px;"></div>
<span class="t" style="left:103.30px;width:300px;text-align:center;top:452.00px;font-size:11px;line-height:13px;color:#d2d2d2;font-weight:700;">6</span>
<div class="cb" style="left:268.1px;top:433.3px;width:23.4px;height:46px;"></div>
<div style="left:270.70000000000005px;top:437.2px;width:18.8px;height:2.1px;background:#c63ca8;border-radius:1px;"></div>
<span class="t" style="left:129.90px;width:300px;text-align:center;top:452.00px;font-size:11px;line-height:13px;color:#d2d2d2;font-weight:700;">7</span>
<div class="cb" style="left:294.70000000000005px;top:433.3px;width:23.4px;height:46px;"></div>
<div style="left:297.30000000000007px;top:437.2px;width:18.8px;height:2.1px;background:#1cb884;border-radius:1px;"></div>
<span class="t" style="left:156.50px;width:300px;text-align:center;top:452.00px;font-size:11px;line-height:13px;color:#d2d2d2;font-weight:700;">8</span>
<div style="left:323px;top:434px;width:1px;height:46px;background:#1c1c1c;"></div>
<div class="cb" style="left:329.3px;top:433.3px;width:23.3px;height:46px;"></div>
<div style="left:331.90000000000003px;top:437.2px;width:18.2px;height:2.1px;background:#e88a22;border-radius:1px;"></div>
<span class="t" style="left:191.00px;width:300px;text-align:center;top:444.70px;font-size:9px;line-height:11px;color:#e6e6e6;font-weight:400;transform:scaleX(1.091);transform-origin:center center;-webkit-text-stroke:0.2px;">Add</span>
<span class="t" style="left:190.94px;width:300px;text-align:center;top:453.80px;font-size:9px;line-height:11px;color:#e6e6e6;font-weight:400;letter-spacing:-0.11px;-webkit-text-stroke:0.2px;">New</span>
<span class="t" style="left:191.00px;width:300px;text-align:center;top:462.40px;font-size:9px;line-height:11px;color:#e6e6e6;font-weight:400;transform:scaleX(1.099);transform-origin:center center;-webkit-text-stroke:0.2px;">Math</span>
<div class="cb" style="left:356.1px;top:433.3px;width:23.3px;height:46px;"></div>
<div style="left:358.70000000000005px;top:437.2px;width:18.2px;height:2.1px;background:#5a8ac8;border-radius:1px;"></div>
<span class="t" style="left:217.80px;width:300px;text-align:center;top:444.70px;font-size:9px;line-height:11px;color:#e6e6e6;font-weight:400;transform:scaleX(1.091);transform-origin:center center;-webkit-text-stroke:0.2px;">Add</span>
<span class="t" style="left:217.74px;width:300px;text-align:center;top:453.80px;font-size:9px;line-height:11px;color:#e6e6e6;font-weight:400;letter-spacing:-0.11px;-webkit-text-stroke:0.2px;">New</span>
<span class="t" style="left:217.80px;width:300px;text-align:center;top:462.40px;font-size:9px;line-height:11px;color:#e6e6e6;font-weight:400;transform:scaleX(1.091);transform-origin:center center;-webkit-text-stroke:0.2px;">Ref</span>
<div class="cb" style="left:382.6px;top:433.3px;width:23.3px;height:46px;"></div>
<div style="left:385.20000000000005px;top:437.2px;width:18.2px;height:2.1px;background:#b050d8;border-radius:1px;"></div>
<span class="t" style="left:244.30px;width:300px;text-align:center;top:444.70px;font-size:9px;line-height:11px;color:#e6e6e6;font-weight:400;transform:scaleX(1.091);transform-origin:center center;-webkit-text-stroke:0.2px;">Add</span>
<span class="t" style="left:244.24px;width:300px;text-align:center;top:453.80px;font-size:9px;line-height:11px;color:#e6e6e6;font-weight:400;letter-spacing:-0.11px;-webkit-text-stroke:0.2px;">New</span>
<span class="t" style="left:244.32px;width:300px;text-align:center;top:462.40px;font-size:9px;line-height:11px;color:#e6e6e6;font-weight:400;letter-spacing:0.04px;-webkit-text-stroke:0.2px;">Bus</span>
<div style="left:411.5px;top:434px;width:1px;height:46px;background:#1c1c1c;"></div>
<div class="cb" style="left:418px;top:433.3px;width:23.2px;height:46px;"></div>
<div style="left:420.6px;top:437.2px;width:18.2px;height:2.1px;background:#454545;border-radius:1px;"></div>
<span class="t" style="left:279.84px;width:300px;text-align:center;top:453.60px;font-size:9px;line-height:11px;color:#e6e6e6;font-weight:400;letter-spacing:0.49px;-webkit-text-stroke:0.2px;">DVM</span>
<div class="cb" style="left:447.5px;top:433.3px;width:23.2px;height:46px;"></div>
<div style="left:450.1px;top:437.2px;width:18.2px;height:2.1px;background:#454545;border-radius:1px;"></div>
<span class="t" style="left:309.10px;width:300px;text-align:center;top:453.60px;font-size:9px;line-height:11px;color:#e6e6e6;font-weight:400;transform:scaleX(0.959);transform-origin:center center;-webkit-text-stroke:0.2px;">AFG</span>
<div style="left:476px;top:434px;width:1px;height:46px;background:#1c1c1c;"></div>
<div style="left:483.8px;top:434.3px;width:116.4px;height:45px;background:#c9c9c9;border-radius:2.5px;overflow:hidden;"><div style="left:0;top:0;width:100%;height:10.7px;background:#5a5a5a"></div></div>
<span class="t" style="left:486.77px;top:433.85px;font-size:8.9px;line-height:10.9px;color:#d0d0d0;font-weight:700;letter-spacing:-0.02px;">Horizontal</span>
<div style="left:603.8px;top:434.3px;width:92.3px;height:45px;background:#c9c9c9;border-radius:2.5px;overflow:hidden;"><div style="left:0;top:0;width:100%;height:10.7px;background:#5a5a5a"></div></div>
<span class="t" style="left:606.77px;top:433.85px;font-size:8.9px;line-height:10.9px;color:#d0d0d0;font-weight:700;letter-spacing:-0.22px;">Trigger</span>
<div style="left:700.7px;top:434.3px;width:86.7px;height:45px;background:#c9c9c9;border-radius:2.5px;overflow:hidden;"><div style="left:0;top:0;width:100%;height:10.7px;background:#5a5a5a"></div></div>
<span class="t" style="left:703.67px;top:433.85px;font-size:8.9px;line-height:10.9px;color:#d0d0d0;font-weight:700;letter-spacing:-0.29px;">Acquisition</span>
<span class="t" style="left:486.98px;top:447.15px;font-size:8.6px;line-height:10.6px;color:#1c1c1c;font-weight:400;letter-spacing:0.24px;-webkit-text-stroke:0.2px;">30 µs/div</span>
<span class="t" style="left:486.98px;top:457.35px;font-size:8.6px;line-height:10.6px;color:#1c1c1c;font-weight:400;letter-spacing:-0.29px;-webkit-text-stroke:0.2px;">SR: 3.125 GS/s</span>
<span class="t" style="left:486.98px;top:468.25px;font-size:8.6px;line-height:10.6px;color:#1c1c1c;font-weight:400;letter-spacing:0.08px;-webkit-text-stroke:0.2px;">RL: 937.5 kpts</span>
<span class="t" style="left:548.88px;top:447.15px;font-size:8.6px;line-height:10.6px;color:#1c1c1c;font-weight:400;letter-spacing:0.13px;-webkit-text-stroke:0.2px;">300 µs</span>
<span class="t" style="left:548.88px;top:457.35px;font-size:8.6px;line-height:10.6px;color:#1c1c1c;font-weight:400;letter-spacing:0.23px;-webkit-text-stroke:0.2px;">320 ps/pt</span>
<span class="t" style="left:556.68px;top:468.25px;font-size:8.6px;line-height:10.6px;color:#1c1c1c;font-weight:400;letter-spacing:0.21px;-webkit-text-stroke:0.2px;">30.2%</span>
<span class="t" style="left:642.78px;top:447.25px;font-size:8.6px;line-height:10.6px;color:#1c1c1c;font-weight:400;letter-spacing:0.40px;-webkit-text-stroke:0.2px;">640 mA</span>
<span class="t" style="left:703.48px;top:447.15px;font-size:8.6px;line-height:10.6px;color:#1c1c1c;font-weight:400;transform:scaleX(1.176);transform-origin:left center;-webkit-text-stroke:0.2px;">Auto,</span>
<span class="t" style="left:749.08px;top:447.15px;font-size:8.6px;line-height:10.6px;color:#1c1c1c;font-weight:400;letter-spacing:0.42px;-webkit-text-stroke:0.2px;">Analyze</span>
<span class="t" style="left:703.78px;top:457.35px;font-size:8.6px;line-height:10.6px;color:#1c1c1c;font-weight:400;letter-spacing:0.10px;-webkit-text-stroke:0.2px;">High Res: 12 bits</span>
<span class="t" style="left:703.48px;top:468.25px;font-size:8.6px;line-height:10.6px;color:#1c1c1c;font-weight:400;letter-spacing:0.24px;-webkit-text-stroke:0.2px;">0 Acqs</span>
<div style="left:607.2px;top:447px;width:17.7px;height:10.2px;background:#f2ea2a;border:1px solid #5a5a30;border-radius:2.5px;box-sizing:border-box;"></div>
<span class="t" style="left:466.10px;width:300px;text-align:center;top:446.95px;font-size:8.5px;line-height:10.5px;color:#222;font-weight:700;">1</span>
<svg style="position:absolute;left:628px;top:446px" width="13" height="12"><path d="M1.4,9.3 H3.6 L7.6,2.9 H10.9" fill="none" stroke="#4a4a90" stroke-width="0.9"/></svg>
<svg style="position:absolute;left:549px;top:469px" width="6" height="8"><path d="M0.3,0.6 h5 v4.2 l-2.5,2 l-2.5,-2 z" fill="#e88a22"/><path d="M1.9,1.8 v2 h1.8 v-2" stroke="#5a3208" stroke-width="0.8" fill="none"/></svg>
<div style="left:793.1px;top:434px;width:1.4px;height:46px;background:#1c1c1c;"></div>
<div style="left:799.7px;top:433px;width:52.3px;height:21.6px;background:#f0f020;border-radius:3px 0 0 3px;"></div>
<span class="t" style="left:676.30px;width:300px;text-align:center;top:438.65px;font-size:7.3px;line-height:9.3px;color:#2a2a08;font-weight:700;letter-spacing:-0.01px;">Ready</span>
<div style="left:799.7px;top:458.7px;width:52.3px;height:20.6px;background:#c9c9c9;border-radius:2px 0 0 2px;"></div>
<span class="t" style="left:676.34px;width:300px;text-align:center;top:458.80px;font-size:8.8px;line-height:10.8px;color:#1c1c1c;font-weight:400;letter-spacing:0.08px;-webkit-text-stroke:0.2px;">19 Mar 2020</span>
<span class="t" style="left:676.27px;width:300px;text-align:center;top:468.70px;font-size:8.8px;line-height:10.8px;color:#1c1c1c;font-weight:400;letter-spacing:-0.06px;-webkit-text-stroke:0.2px;">1:28:57 PM</span>
<div style="left:0px;top:479.6px;width:862px;height:9.399999999999977px;background:#fff;"></div>
<div style="left:852px;top:0px;width:10px;height:489px;background:#fff;"></div>
</div></body></html>
